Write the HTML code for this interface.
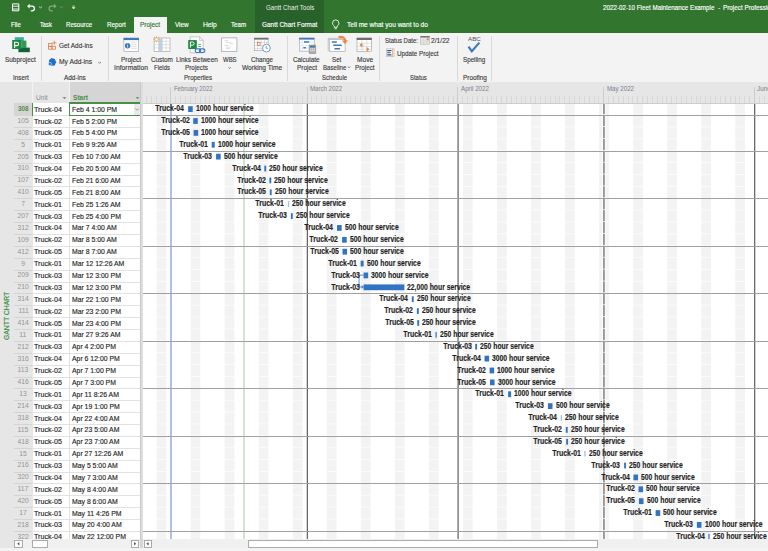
<!DOCTYPE html><html><head><meta charset="utf-8"><style>
*{box-sizing:border-box;margin:0;padding:0}
html,body{width:768px;height:551px;overflow:hidden;background:#f3f3f3;font-family:"Liberation Sans", sans-serif;position:relative}
.a{position:absolute;white-space:nowrap}
svg{position:absolute;overflow:visible}
</style></head><body><div class="a" style="left:0;top:0;width:768px;height:33px;background:#31752f"></div>
<div class="a" style="left:255px;top:0;width:69px;height:33px;background:#29612a"></div>
<div class="a" style="left:133.5px;top:16.7px;width:33.1px;height:16.5px;background:#f3f3f3"></div>
<div class="a" style="left:10.90px;top:21.37px;font-size:7.0px;line-height:1;color:#ffffff;transform:scaleX(0.8687);transform-origin:0 0;-webkit-text-stroke:0.15px #ffffff">File</div>
<div class="a" style="left:39.50px;top:21.37px;font-size:7.0px;line-height:1;color:#ffffff;transform:scaleX(0.8191);transform-origin:0 0;-webkit-text-stroke:0.15px #ffffff">Task</div>
<div class="a" style="left:65.80px;top:21.37px;font-size:7.0px;line-height:1;color:#ffffff;transform:scaleX(0.8709);transform-origin:0 0;-webkit-text-stroke:0.15px #ffffff">Resource</div>
<div class="a" style="left:106.50px;top:21.37px;font-size:7.0px;line-height:1;color:#ffffff;transform:scaleX(0.8946);transform-origin:0 0;-webkit-text-stroke:0.15px #ffffff">Report</div>
<div class="a" style="left:139.80px;top:21.37px;font-size:7.0px;line-height:1;color:#31752f;transform:scaleX(0.9222);transform-origin:0 0;-webkit-text-stroke:0.15px #31752f">Project</div>
<div class="a" style="left:174.50px;top:21.37px;font-size:7.0px;line-height:1;color:#ffffff;transform:scaleX(0.9038);transform-origin:0 0;-webkit-text-stroke:0.15px #ffffff">View</div>
<div class="a" style="left:202.50px;top:21.37px;font-size:7.0px;line-height:1;color:#ffffff;transform:scaleX(0.9579);transform-origin:0 0;-webkit-text-stroke:0.15px #ffffff">Help</div>
<div class="a" style="left:230.80px;top:21.37px;font-size:7.0px;line-height:1;color:#ffffff;transform:scaleX(0.8759);transform-origin:0 0;-webkit-text-stroke:0.15px #ffffff">Team</div>
<div class="a" style="left:261.50px;top:21.37px;font-size:7.0px;line-height:1;color:#ffffff;transform:scaleX(0.9171);transform-origin:0 0;-webkit-text-stroke:0.15px #ffffff">Gantt Chart Format</div>
<div class="a" style="left:346.50px;top:21.37px;font-size:7.0px;line-height:1;color:#ffffff;transform:scaleX(0.9364);transform-origin:0 0;-webkit-text-stroke:0.15px #ffffff">Tell me what you want to do</div>
<div class="a" style="left:265.80px;top:3.87px;font-size:7.0px;line-height:1;color:#e8efe8;transform:scaleX(0.8906);transform-origin:0 0;">Gantt Chart Tools</div>
<div class="a" style="left:602.60px;top:3.91px;font-size:7.2px;line-height:1;color:#ffffff;transform:scaleX(0.8713);transform-origin:0 0;-webkit-text-stroke:0.15px #fff">2022-02-10 Fleet Maintenance Example</div>
<div class="a" style="left:717.60px;top:3.91px;font-size:7.2px;line-height:1;color:#ffffff;transform:scaleX(0.9974);transform-origin:0 0;">-</div>
<div class="a" style="left:723.30px;top:3.91px;font-size:7.2px;line-height:1;color:#ffffff;transform:scaleX(0.8800);transform-origin:0 0;-webkit-text-stroke:0.15px #fff">Project Professional</div>
<svg style="left:0;top:0" width="90" height="16" viewBox="0 0 90 16">
<g fill="none" stroke="#fff" stroke-width="1.1">
<path d="M12.5 3.9h6.3v6.9h-6.3z" stroke-width="1.0"/><path d="M12.5 6.2h6.3M12.5 9h6.3" stroke-width="0.9"/>
<path d="M28.5 6.2h3.6a2.3 2.3 0 0 1 0 4.6h-1.3" stroke-width="1.3"/>
</g>
<path d="M27 6.2l2.6-2.4v4.8z" fill="#fff"/>
<path d="M39 6.6l1.5 1.2 1.5-1.2" fill="none" stroke="#dfe9df" stroke-width="0.8"/>
<g fill="none" stroke="#7fae7d" stroke-width="1.2"><path d="M55 6.2h-3.6a2.3 2.3 0 0 0 0 4.6h1.3"/></g>
<path d="M56.6 6.2l-2.6-2.4v4.8z" fill="#7fae7d"/>
<path d="M60.2 6.6l1.3 1.1 1.3-1.1" fill="none" stroke="#7fae7d" stroke-width="0.8"/>
<path d="M72.3 6.1h2.6M72.3 7.4h2.6l-1.3 1.6z" fill="#e8efe8" stroke="#e8efe8" stroke-width="0.7"/>
</svg>
<svg style="left:0;top:0" width="345" height="33" viewBox="0 0 345 33">
<path d="M334.3 27.4v-1.3c-1-0.7-1.8-1.8-1.8-3a3.2 3.2 0 0 1 6.4 0c0 1.2-0.8 2.3-1.8 3v1.3z" fill="none" stroke="#fff" stroke-width="0.85"/>
<path d="M334.5 28.8h2.4" stroke="#fff" stroke-width="0.8"/>
</svg>
<div class="a" style="left:0;top:33px;width:768px;height:49px;background:#f3f3f3"></div>
<div class="a" style="left:41.3px;top:35.5px;width:1px;height:45px;background:#d9d9d9"></div>
<div class="a" style="left:107.7px;top:35.5px;width:1px;height:45px;background:#d9d9d9"></div>
<div class="a" style="left:286.9px;top:35.5px;width:1px;height:45px;background:#d9d9d9"></div>
<div class="a" style="left:379.3px;top:35.5px;width:1px;height:45px;background:#d9d9d9"></div>
<div class="a" style="left:456.9px;top:35.5px;width:1px;height:45px;background:#d9d9d9"></div>
<div class="a" style="left:491.0px;top:35.5px;width:1px;height:45px;background:#d9d9d9"></div>
<div class="a" style="left:5.40px;top:55.97px;font-size:7.0px;line-height:1;color:#363636;transform:scaleX(0.9173);transform-origin:0 0;-webkit-text-stroke:0.12px #363636">Subproject</div>
<div class="a" style="left:120.90px;top:55.97px;font-size:7.0px;line-height:1;color:#363636;transform:scaleX(0.9222);transform-origin:0 0;-webkit-text-stroke:0.12px #363636">Project</div>
<div class="a" style="left:113.90px;top:64.27px;font-size:7.0px;line-height:1;color:#363636;transform:scaleX(0.9734);transform-origin:0 0;-webkit-text-stroke:0.12px #363636">Information</div>
<div class="a" style="left:151.10px;top:55.97px;font-size:7.0px;line-height:1;color:#363636;transform:scaleX(0.9078);transform-origin:0 0;-webkit-text-stroke:0.12px #363636">Custom</div>
<div class="a" style="left:154.00px;top:64.27px;font-size:7.0px;line-height:1;color:#363636;transform:scaleX(0.8562);transform-origin:0 0;-webkit-text-stroke:0.12px #363636">Fields</div>
<div class="a" style="left:176.20px;top:55.97px;font-size:7.0px;line-height:1;color:#363636;transform:scaleX(0.9181);transform-origin:0 0;-webkit-text-stroke:0.12px #363636">Links Between</div>
<div class="a" style="left:185.20px;top:64.27px;font-size:7.0px;line-height:1;color:#363636;transform:scaleX(0.9092);transform-origin:0 0;-webkit-text-stroke:0.12px #363636">Projects</div>
<div class="a" style="left:222.90px;top:55.97px;font-size:7.0px;line-height:1;color:#363636;transform:scaleX(0.8525);transform-origin:0 0;-webkit-text-stroke:0.12px #363636">WBS</div>
<div class="a" style="left:251.30px;top:55.97px;font-size:7.0px;line-height:1;color:#363636;transform:scaleX(0.8968);transform-origin:0 0;-webkit-text-stroke:0.12px #363636">Change</div>
<div class="a" style="left:241.80px;top:64.27px;font-size:7.0px;line-height:1;color:#363636;transform:scaleX(0.9397);transform-origin:0 0;-webkit-text-stroke:0.12px #363636">Working Time</div>
<div class="a" style="left:293.30px;top:55.97px;font-size:7.0px;line-height:1;color:#363636;transform:scaleX(0.9079);transform-origin:0 0;-webkit-text-stroke:0.12px #363636">Calculate</div>
<div class="a" style="left:296.50px;top:64.27px;font-size:7.0px;line-height:1;color:#363636;transform:scaleX(0.9176);transform-origin:0 0;-webkit-text-stroke:0.12px #363636">Project</div>
<div class="a" style="left:332.30px;top:55.97px;font-size:7.0px;line-height:1;color:#363636;transform:scaleX(0.8844);transform-origin:0 0;-webkit-text-stroke:0.12px #363636">Set</div>
<div class="a" style="left:322.50px;top:64.27px;font-size:7.0px;line-height:1;color:#363636;transform:scaleX(0.8712);transform-origin:0 0;-webkit-text-stroke:0.12px #363636">Baseline</div>
<div class="a" style="left:356.60px;top:55.97px;font-size:7.0px;line-height:1;color:#363636;transform:scaleX(0.9401);transform-origin:0 0;-webkit-text-stroke:0.12px #363636">Move</div>
<div class="a" style="left:354.50px;top:64.27px;font-size:7.0px;line-height:1;color:#363636;transform:scaleX(0.8992);transform-origin:0 0;-webkit-text-stroke:0.12px #363636">Project</div>
<div class="a" style="left:462.90px;top:55.97px;font-size:7.0px;line-height:1;color:#363636;transform:scaleX(0.8908);transform-origin:0 0;-webkit-text-stroke:0.12px #363636">Spelling</div>
<div class="a" style="left:12.90px;top:74.47px;font-size:7.0px;line-height:1;color:#363636;transform:scaleX(0.9021);transform-origin:0 0;-webkit-text-stroke:0.12px #363636">Insert</div>
<div class="a" style="left:64.20px;top:74.47px;font-size:7.0px;line-height:1;color:#363636;transform:scaleX(0.9185);transform-origin:0 0;-webkit-text-stroke:0.12px #363636">Add-ins</div>
<div class="a" style="left:184.20px;top:74.47px;font-size:7.0px;line-height:1;color:#363636;transform:scaleX(0.8776);transform-origin:0 0;-webkit-text-stroke:0.12px #363636">Properties</div>
<div class="a" style="left:321.50px;top:74.47px;font-size:7.0px;line-height:1;color:#363636;transform:scaleX(0.8595);transform-origin:0 0;-webkit-text-stroke:0.12px #363636">Schedule</div>
<div class="a" style="left:410.10px;top:74.47px;font-size:7.0px;line-height:1;color:#363636;transform:scaleX(0.8459);transform-origin:0 0;-webkit-text-stroke:0.12px #363636">Status</div>
<div class="a" style="left:462.60px;top:74.47px;font-size:7.0px;line-height:1;color:#363636;transform:scaleX(0.9165);transform-origin:0 0;-webkit-text-stroke:0.12px #363636">Proofing</div>
<div class="a" style="left:58.50px;top:42.07px;font-size:7.0px;line-height:1;color:#363636;transform:scaleX(0.9186);transform-origin:0 0;-webkit-text-stroke:0.12px #363636">Get Add-ins</div>
<div class="a" style="left:58.50px;top:58.27px;font-size:7.0px;line-height:1;color:#363636;transform:scaleX(0.9588);transform-origin:0 0;-webkit-text-stroke:0.12px #363636">My Add-ins</div>
<div class="a" style="left:384.60px;top:37.17px;font-size:7.0px;line-height:1;color:#363636;transform:scaleX(0.8539);transform-origin:0 0;-webkit-text-stroke:0.12px #363636">Status Date:</div>
<div class="a" style="left:430.90px;top:37.17px;font-size:7.0px;line-height:1;color:#363636;transform:scaleX(0.9554);transform-origin:0 0;-webkit-text-stroke:0.12px #363636">2/1/22</div>
<div class="a" style="left:396.70px;top:49.57px;font-size:7.0px;line-height:1;color:#363636;transform:scaleX(0.8982);transform-origin:0 0;-webkit-text-stroke:0.12px #363636">Update Project</div>
<svg style="left:0;top:0" width="500" height="82" viewBox="0 0 500 82">
<g fill="none" stroke="#666" stroke-width="0.8">
<path d="M98.2 62l1.4 1.2 1.4-1.2"/>
<path d="M228.4 67.3l1.3 1.1 1.3-1.1"/>
<path d="M347.8 66.6l1.3 1.1 1.3-1.1"/>
</g>
</svg>
<svg style="left:0;top:0" width="500" height="82" viewBox="0 0 500 82">
<!-- Subproject: project logo -->
<rect x="14.8" y="37.2" width="9" height="4" fill="#3aaea3"/>
<rect x="21.4" y="40.6" width="5" height="7.2" fill="#2d9a55"/>
<rect x="18.4" y="47.6" width="11.4" height="4.6" fill="#17613a"/>
<rect x="12.2" y="40" width="9.2" height="9" fill="#1b8a3e"/>
<path d="M14.6 48v-5.8h2.3a1.7 1.7 0 0 1 0 3.4h-2.3" fill="none" stroke="#fff" stroke-width="1.1"/>
<!-- Get Add-ins -->
<g fill="none" stroke="#e07a44" stroke-width="0.75">
<rect x="48.5" y="43.4" width="3.5" height="2.9"/><rect x="48.5" y="46.3" width="3.5" height="2.9"/><rect x="52" y="46.3" width="3.5" height="2.9"/>
<path d="M54.3 40.6v4.4M52.1 42.8h4.4"/>
</g>
<!-- My Add-ins -->
<path d="M51.5 57.9l3.3 1.2 1.3 3.2-1.4 3.2-3.5 0.3-2.5-2.4 0.5-3.5z" fill="#1c6fd1"/>
<circle cx="49.9" cy="64" r="1.6" fill="#1c6fd1" stroke="#f3f3f3" stroke-width="0.6"/>
<!-- Project Information -->
<rect x="123.9" y="38.1" width="14.8" height="13.2" fill="#fff" stroke="#9a9a9a" stroke-width="0.6"/>
<rect x="123.6" y="37.9" width="15.4" height="2.2" fill="#3d78bd"/>
<circle cx="127.6" cy="45.8" r="2.7" fill="#3d78bd"/>
<path d="M127.6 44.9v2.7" stroke="#fff" stroke-width="0.7"/><circle cx="127.6" cy="44" r="0.4" fill="#fff"/>
<g stroke="#c8c8c8" stroke-width="0.6"><path d="M131 42.3h5.6M131 44.3h5.6M131 46.3h5.6M131 48.3h5.6"/></g>
<!-- Custom Fields -->
<rect x="154.1" y="38" width="15.9" height="13.4" fill="#fff" stroke="#9a9a9a" stroke-width="0.6"/>
<rect x="158.7" y="38.2" width="3.6" height="13" fill="#bcd3ee"/>
<g stroke="#c4c4c4" stroke-width="0.5"><path d="M154.1 41.3h15.9M154.1 44.6h15.9M154.1 47.9h15.9M158.7 38v13.4M162.3 38v13.4M166.1 38v13.4"/></g>
<g stroke="#e8a850" stroke-width="0.9"><path d="M156.5 36.3v6.1M153.4 39.4h6.1M154.3 37.2l4.4 4.4M158.7 37.2l-4.4 4.4"/></g>
<circle cx="156.5" cy="39.4" r="1.2" fill="#fff"/>
<!-- Links Between Projects -->
<path d="M190.2 36.8h9.5l3.5 3.5v12.5h-13z" fill="#fff" stroke="#a6a6a6" stroke-width="0.6"/>
<path d="M199.7 36.8v3.5h3.5" fill="none" stroke="#a6a6a6" stroke-width="0.6"/>
<rect x="188.2" y="40.1" width="8.6" height="8.9" fill="#1b8a3e"/>
<path d="M190.4 47.6v-5.6h2.1a1.6 1.6 0 0 1 0 3.2h-2.1" fill="none" stroke="#fff" stroke-width="1"/>
<path d="M198.3 44.4h2.6" stroke="#2aa7a0" stroke-width="0.9"/><path d="M198.3 46.6h2.6" stroke="#2d9a55" stroke-width="0.9"/>
<g fill="none" stroke="#3d78bd" stroke-width="1.2"><rect x="195.2" y="48.9" width="5.6" height="3.6" rx="1.8"/><rect x="199.3" y="48.9" width="5.6" height="3.6" rx="1.8"/></g>
<!-- WBS -->
<rect x="221.5" y="37.9" width="15.4" height="13.4" fill="#fff" stroke="#9d9d9d" stroke-width="0.7"/>
<g stroke="#b8b8b8" stroke-width="0.5"><path d="M224.3 40.7h4M225.8 42.3h5.2M230 43.6h3.2M224.3 45.5h4M225.8 47.1h4.6M225.8 48.6h4"/></g>
<!-- Change Working Time -->
<rect x="254.3" y="38.2" width="13.8" height="12.5" fill="#fff" stroke="#9a9a9a" stroke-width="0.6"/>
<rect x="254.1" y="37.8" width="14.2" height="1.8" fill="#6e6e6e"/>
<g stroke="#bdbdbd" stroke-width="0.5"><path d="M254.3 42.5h13.8M254.3 45.6h13.8M254.3 48.4h13.8M257.7 39.6v11M261.1 39.6v11M264.6 39.6v11"/></g>
<rect x="257.4" y="42.3" width="2.7" height="3" fill="none" stroke="#e07a44" stroke-width="0.8"/>
<circle cx="266.4" cy="48.1" r="3.9" fill="#fff" stroke="#4a86c8" stroke-width="0.8"/>
<path d="M266.2 45.9v2.4h1.8" fill="none" stroke="#555" stroke-width="0.6"/>
<!-- Calculate Project -->
<rect x="299.4" y="38.1" width="14.8" height="13" fill="#fff" stroke="#9a9a9a" stroke-width="0.6"/>
<rect x="299.2" y="37.8" width="15.2" height="1.8" fill="#3d78bd"/>
<g stroke="#c9d6e6" stroke-width="0.5"><path d="M302.3 39.6v11.5M299.4 42.5h14.8M299.4 45.3h14.8M299.4 48.2h14.8"/></g>
<rect x="304" y="41.2" width="5.2" height="1.5" fill="#3d78bd"/>
<rect x="303.3" y="47" width="2.6" height="1.5" fill="#3d78bd"/>
<rect x="309.1" y="45" width="6.7" height="8.6" fill="#a9a9a9" stroke="#8a8a8a" stroke-width="0.5"/>
<rect x="309.9" y="45.8" width="5.1" height="1.6" fill="#3d78bd"/>
<g fill="#e6e6e6"><rect x="310" y="48.3" width="1.4" height="1.1"/><rect x="311.8" y="48.3" width="1.4" height="1.1"/><rect x="313.6" y="48.3" width="1.4" height="1.1"/><rect x="310" y="50.2" width="1.4" height="1.1"/><rect x="311.8" y="50.2" width="1.4" height="1.1"/><rect x="313.6" y="50.2" width="1.4" height="1.1"/></g>
<!-- Set Baseline -->
<path d="M328.2 51.2v-12.9h14" fill="none" stroke="#a0a0a0" stroke-width="0.6"/>
<rect x="329.5" y="39.6" width="15.6" height="11.8" fill="#fff" stroke="#a0a0a0" stroke-width="0.6"/>
<g stroke="#3d78bd" stroke-width="1.5" stroke-linecap="round"><path d="M332.3 41.9h4M333.8 45.3h7.4M335 48.7h4.5"/></g>
<path d="M338.6 37.2c3.8-1.2 7 1 6.6 4.6" fill="none" stroke="#e8884a" stroke-width="2.2"/>
<path d="M341.8 40.6l3.2 3.6 2.8-3.9z" fill="#e8884a"/>
<!-- Move Project -->
<rect x="357" y="38.1" width="14.6" height="13.4" fill="#fff" stroke="#9a9a9a" stroke-width="0.6"/>
<rect x="356.7" y="37.8" width="15.1" height="2.2" fill="#6e6e6e"/>
<g stroke="#c4c4c4" stroke-width="0.5"><path d="M357 43.2h14.6M357 46.6h14.6M357 49.3h14.6M361.9 40v11.5M366.8 40v11.5"/></g>
<path d="M362.3 42.6l-3 2.4 3 2.4z" fill="#e8884a"/>
<path d="M366.6 46.9l3 2.4-3 2.4z" fill="#e8884a"/>
<path d="M361.7 45.1h3" stroke="#9a9a9a" stroke-width="0.5"/>
<!-- Status date calendar -->
<rect x="420.7" y="36.2" width="8.8" height="8" fill="#e9e9e9" stroke="#a6a6a6" stroke-width="0.5"/>
<rect x="420.6" y="36" width="9" height="1.6" fill="#777"/>
<g stroke="#c8c8c8" stroke-width="0.4"><path d="M423.6 37.6v6.6M426.6 37.6v6.6M420.7 40.2h8.8M420.7 42.3h8.8"/></g>
<rect x="426.9" y="38.4" width="1.8" height="1.8" fill="#f07840"/>
<!-- Update project -->
<rect x="386.3" y="48.9" width="7.7" height="7.7" fill="#fff" stroke="#9a9a9a" stroke-width="0.5"/>
<g stroke="#2b4f8a" stroke-width="1.1"><path d="M387.2 50.6h4.3M387.2 52.7h3.5M387.2 54.9h4.3"/></g>
<path d="M392.6 49v7.5" stroke="#e8a040" stroke-width="0.8"/>
<!-- Spelling -->
<path d="M468.5 46.6l3.3 4.6 7.6-8.6" fill="none" stroke="#3d78bd" stroke-width="2.1"/>
</svg>
<div class="a" style="left:467.80px;top:36.15px;font-size:6.2px;line-height:1;color:#555555;transform:scaleX(1.0130);transform-origin:0 0;">ABC</div>
<div class="a" style="left:0;top:82px;width:768px;height:457.3px;background:#e6e6e6"></div>
<div class="a" style="left:69px;top:82px;width:70.5px;height:21px;background:#d5d5d5"></div>
<div class="a" style="left:32px;top:82px;width:0.8px;height:21px;background:#f2f2f2"></div>
<div class="a" style="left:68.6px;top:82px;width:0.8px;height:21px;background:#f2f2f2"></div>
<div class="a" style="left:139.9px;top:82px;width:2.8px;height:457.3px;background:#dedede;border-left:0.8px solid #c9c9c9"></div>
<div class="a" style="left:35.80px;top:93.57px;font-size:7.0px;line-height:1;color:#8a8a8a;transform:scaleX(0.9395);transform-origin:0 0;">Unit</div>
<div class="a" style="left:72.90px;top:93.57px;font-size:7.0px;line-height:1;font-weight:bold;color:#4a8f47;transform:scaleX(0.9403);transform-origin:0 0;">Start</div>
<svg style="left:0;top:0" width="145" height="104" viewBox="0 0 145 104"><path d="M62.5 97.2h3.9l-1.95 1.9z" fill="#707070"/><path d="M135.6 97.2h3.7l-1.85 1.9z" fill="#4a8f47"/></svg>
<div class="a" style="left:2.6px;top:339.7px;transform-origin:0 0;transform:rotate(-90deg) scaleX(0.85);font-size:8px;line-height:8px;color:#3f9140;-webkit-text-stroke:0.2px #3f9140">GANTT CHART</div>
<div class="a" style="left:32.8px;top:103.02px;width:107.1px;height:439.56px;background:#fff"></div>
<div class="a" style="left:14px;top:103.12px;width:18px;height:12.38px;background:#d5d5d5"></div>
<div class="a" style="left:68.8px;top:103.02px;width:1px;height:439.56px;background:#e2e2e2"></div>
<div class="a" style="left:14px;top:115.20px;width:18px;height:1px;background:#d4d4d4"></div>
<div class="a" style="left:32.8px;top:115.20px;width:107.1px;height:1px;background:#e2e2e2"></div>
<div class="a" style="left:17.03px;top:105.06px;font-size:7.4px;line-height:1;font-weight:bold;color:#4a8f47;transform:scaleX(0.8500);transform-origin:50% 0;">308</div>
<div class="a" style="left:34.30px;top:105.69px;font-size:7.6px;line-height:1;color:#222222;transform:scaleX(0.9400);transform-origin:0 0;-webkit-text-stroke:0.15px #222">Truck-04</div>
<div class="a" style="left:71.80px;top:105.69px;font-size:7.6px;line-height:1;color:#222222;transform:scaleX(0.9050);transform-origin:0 0;-webkit-text-stroke:0.15px #222">Feb 4 1:00 PM</div>
<div class="a" style="left:14px;top:127.08px;width:18px;height:1px;background:#d4d4d4"></div>
<div class="a" style="left:32.8px;top:127.08px;width:107.1px;height:1px;background:#e2e2e2"></div>
<div class="a" style="left:17.03px;top:116.94px;font-size:7.4px;line-height:1;color:#959595;transform:scaleX(0.9200);transform-origin:50% 0;">105</div>
<div class="a" style="left:34.30px;top:117.57px;font-size:7.6px;line-height:1;color:#222222;transform:scaleX(0.9400);transform-origin:0 0;-webkit-text-stroke:0.15px #222">Truck-02</div>
<div class="a" style="left:71.80px;top:117.57px;font-size:7.6px;line-height:1;color:#222222;transform:scaleX(0.9050);transform-origin:0 0;-webkit-text-stroke:0.15px #222">Feb 5 2:00 PM</div>
<div class="a" style="left:14px;top:138.96px;width:18px;height:1px;background:#d4d4d4"></div>
<div class="a" style="left:32.8px;top:138.96px;width:107.1px;height:1px;background:#e2e2e2"></div>
<div class="a" style="left:17.03px;top:128.82px;font-size:7.4px;line-height:1;color:#959595;transform:scaleX(0.9200);transform-origin:50% 0;">408</div>
<div class="a" style="left:34.30px;top:129.45px;font-size:7.6px;line-height:1;color:#222222;transform:scaleX(0.9400);transform-origin:0 0;-webkit-text-stroke:0.15px #222">Truck-05</div>
<div class="a" style="left:71.80px;top:129.45px;font-size:7.6px;line-height:1;color:#222222;transform:scaleX(0.9050);transform-origin:0 0;-webkit-text-stroke:0.15px #222">Feb 5 4:00 PM</div>
<div class="a" style="left:14px;top:150.84px;width:18px;height:1px;background:#d4d4d4"></div>
<div class="a" style="left:32.8px;top:150.84px;width:107.1px;height:1px;background:#e2e2e2"></div>
<div class="a" style="left:21.14px;top:140.70px;font-size:7.4px;line-height:1;color:#959595;transform:scaleX(0.9200);transform-origin:50% 0;">5</div>
<div class="a" style="left:34.30px;top:141.33px;font-size:7.6px;line-height:1;color:#222222;transform:scaleX(0.9400);transform-origin:0 0;-webkit-text-stroke:0.15px #222">Truck-01</div>
<div class="a" style="left:71.80px;top:141.33px;font-size:7.6px;line-height:1;color:#222222;transform:scaleX(0.9050);transform-origin:0 0;-webkit-text-stroke:0.15px #222">Feb 9 9:26 AM</div>
<div class="a" style="left:14px;top:162.72px;width:18px;height:1px;background:#d4d4d4"></div>
<div class="a" style="left:32.8px;top:162.72px;width:107.1px;height:1px;background:#e2e2e2"></div>
<div class="a" style="left:17.03px;top:152.58px;font-size:7.4px;line-height:1;color:#959595;transform:scaleX(0.9200);transform-origin:50% 0;">205</div>
<div class="a" style="left:34.30px;top:153.21px;font-size:7.6px;line-height:1;color:#222222;transform:scaleX(0.9400);transform-origin:0 0;-webkit-text-stroke:0.15px #222">Truck-03</div>
<div class="a" style="left:71.80px;top:153.21px;font-size:7.6px;line-height:1;color:#222222;transform:scaleX(0.9050);transform-origin:0 0;-webkit-text-stroke:0.15px #222">Feb 10 7:00 AM</div>
<div class="a" style="left:14px;top:174.60px;width:18px;height:1px;background:#d4d4d4"></div>
<div class="a" style="left:32.8px;top:174.60px;width:107.1px;height:1px;background:#e2e2e2"></div>
<div class="a" style="left:17.03px;top:164.46px;font-size:7.4px;line-height:1;color:#959595;transform:scaleX(0.9200);transform-origin:50% 0;">310</div>
<div class="a" style="left:34.30px;top:165.09px;font-size:7.6px;line-height:1;color:#222222;transform:scaleX(0.9400);transform-origin:0 0;-webkit-text-stroke:0.15px #222">Truck-04</div>
<div class="a" style="left:71.80px;top:165.09px;font-size:7.6px;line-height:1;color:#222222;transform:scaleX(0.9050);transform-origin:0 0;-webkit-text-stroke:0.15px #222">Feb 20 5:00 AM</div>
<div class="a" style="left:14px;top:186.48px;width:18px;height:1px;background:#d4d4d4"></div>
<div class="a" style="left:32.8px;top:186.48px;width:107.1px;height:1px;background:#e2e2e2"></div>
<div class="a" style="left:17.03px;top:176.34px;font-size:7.4px;line-height:1;color:#959595;transform:scaleX(0.9200);transform-origin:50% 0;">107</div>
<div class="a" style="left:34.30px;top:176.97px;font-size:7.6px;line-height:1;color:#222222;transform:scaleX(0.9400);transform-origin:0 0;-webkit-text-stroke:0.15px #222">Truck-02</div>
<div class="a" style="left:71.80px;top:176.97px;font-size:7.6px;line-height:1;color:#222222;transform:scaleX(0.9050);transform-origin:0 0;-webkit-text-stroke:0.15px #222">Feb 21 6:00 AM</div>
<div class="a" style="left:14px;top:198.36px;width:18px;height:1px;background:#d4d4d4"></div>
<div class="a" style="left:32.8px;top:198.36px;width:107.1px;height:1px;background:#e2e2e2"></div>
<div class="a" style="left:17.03px;top:188.22px;font-size:7.4px;line-height:1;color:#959595;transform:scaleX(0.9200);transform-origin:50% 0;">410</div>
<div class="a" style="left:34.30px;top:188.85px;font-size:7.6px;line-height:1;color:#222222;transform:scaleX(0.9400);transform-origin:0 0;-webkit-text-stroke:0.15px #222">Truck-05</div>
<div class="a" style="left:71.80px;top:188.85px;font-size:7.6px;line-height:1;color:#222222;transform:scaleX(0.9050);transform-origin:0 0;-webkit-text-stroke:0.15px #222">Feb 21 8:00 AM</div>
<div class="a" style="left:14px;top:210.24px;width:18px;height:1px;background:#d4d4d4"></div>
<div class="a" style="left:32.8px;top:210.24px;width:107.1px;height:1px;background:#e2e2e2"></div>
<div class="a" style="left:21.14px;top:200.10px;font-size:7.4px;line-height:1;color:#959595;transform:scaleX(0.9200);transform-origin:50% 0;">7</div>
<div class="a" style="left:34.30px;top:200.73px;font-size:7.6px;line-height:1;color:#222222;transform:scaleX(0.9400);transform-origin:0 0;-webkit-text-stroke:0.15px #222">Truck-01</div>
<div class="a" style="left:71.80px;top:200.73px;font-size:7.6px;line-height:1;color:#222222;transform:scaleX(0.9050);transform-origin:0 0;-webkit-text-stroke:0.15px #222">Feb 25 1:26 AM</div>
<div class="a" style="left:14px;top:222.12px;width:18px;height:1px;background:#d4d4d4"></div>
<div class="a" style="left:32.8px;top:222.12px;width:107.1px;height:1px;background:#e2e2e2"></div>
<div class="a" style="left:17.03px;top:211.98px;font-size:7.4px;line-height:1;color:#959595;transform:scaleX(0.9200);transform-origin:50% 0;">207</div>
<div class="a" style="left:34.30px;top:212.61px;font-size:7.6px;line-height:1;color:#222222;transform:scaleX(0.9400);transform-origin:0 0;-webkit-text-stroke:0.15px #222">Truck-03</div>
<div class="a" style="left:71.80px;top:212.61px;font-size:7.6px;line-height:1;color:#222222;transform:scaleX(0.9050);transform-origin:0 0;-webkit-text-stroke:0.15px #222">Feb 25 4:00 PM</div>
<div class="a" style="left:14px;top:234.00px;width:18px;height:1px;background:#d4d4d4"></div>
<div class="a" style="left:32.8px;top:234.00px;width:107.1px;height:1px;background:#e2e2e2"></div>
<div class="a" style="left:17.03px;top:223.86px;font-size:7.4px;line-height:1;color:#959595;transform:scaleX(0.9200);transform-origin:50% 0;">312</div>
<div class="a" style="left:34.30px;top:224.49px;font-size:7.6px;line-height:1;color:#222222;transform:scaleX(0.9400);transform-origin:0 0;-webkit-text-stroke:0.15px #222">Truck-04</div>
<div class="a" style="left:71.80px;top:224.49px;font-size:7.6px;line-height:1;color:#222222;transform:scaleX(0.9050);transform-origin:0 0;-webkit-text-stroke:0.15px #222">Mar 7 4:00 AM</div>
<div class="a" style="left:14px;top:245.88px;width:18px;height:1px;background:#d4d4d4"></div>
<div class="a" style="left:32.8px;top:245.88px;width:107.1px;height:1px;background:#e2e2e2"></div>
<div class="a" style="left:17.03px;top:235.74px;font-size:7.4px;line-height:1;color:#959595;transform:scaleX(0.9200);transform-origin:50% 0;">109</div>
<div class="a" style="left:34.30px;top:236.37px;font-size:7.6px;line-height:1;color:#222222;transform:scaleX(0.9400);transform-origin:0 0;-webkit-text-stroke:0.15px #222">Truck-02</div>
<div class="a" style="left:71.80px;top:236.37px;font-size:7.6px;line-height:1;color:#222222;transform:scaleX(0.9050);transform-origin:0 0;-webkit-text-stroke:0.15px #222">Mar 8 5:00 AM</div>
<div class="a" style="left:14px;top:257.76px;width:18px;height:1px;background:#d4d4d4"></div>
<div class="a" style="left:32.8px;top:257.76px;width:107.1px;height:1px;background:#e2e2e2"></div>
<div class="a" style="left:17.03px;top:247.62px;font-size:7.4px;line-height:1;color:#959595;transform:scaleX(0.9200);transform-origin:50% 0;">412</div>
<div class="a" style="left:34.30px;top:248.25px;font-size:7.6px;line-height:1;color:#222222;transform:scaleX(0.9400);transform-origin:0 0;-webkit-text-stroke:0.15px #222">Truck-05</div>
<div class="a" style="left:71.80px;top:248.25px;font-size:7.6px;line-height:1;color:#222222;transform:scaleX(0.9050);transform-origin:0 0;-webkit-text-stroke:0.15px #222">Mar 8 7:00 AM</div>
<div class="a" style="left:14px;top:269.64px;width:18px;height:1px;background:#d4d4d4"></div>
<div class="a" style="left:32.8px;top:269.64px;width:107.1px;height:1px;background:#e2e2e2"></div>
<div class="a" style="left:21.14px;top:259.50px;font-size:7.4px;line-height:1;color:#959595;transform:scaleX(0.9200);transform-origin:50% 0;">9</div>
<div class="a" style="left:34.30px;top:260.13px;font-size:7.6px;line-height:1;color:#222222;transform:scaleX(0.9400);transform-origin:0 0;-webkit-text-stroke:0.15px #222">Truck-01</div>
<div class="a" style="left:71.80px;top:260.13px;font-size:7.6px;line-height:1;color:#222222;transform:scaleX(0.9050);transform-origin:0 0;-webkit-text-stroke:0.15px #222">Mar 12 12:26 AM</div>
<div class="a" style="left:14px;top:281.52px;width:18px;height:1px;background:#d4d4d4"></div>
<div class="a" style="left:32.8px;top:281.52px;width:107.1px;height:1px;background:#e2e2e2"></div>
<div class="a" style="left:17.03px;top:271.38px;font-size:7.4px;line-height:1;color:#959595;transform:scaleX(0.9200);transform-origin:50% 0;">209</div>
<div class="a" style="left:34.30px;top:272.01px;font-size:7.6px;line-height:1;color:#222222;transform:scaleX(0.9400);transform-origin:0 0;-webkit-text-stroke:0.15px #222">Truck-03</div>
<div class="a" style="left:71.80px;top:272.01px;font-size:7.6px;line-height:1;color:#222222;transform:scaleX(0.9050);transform-origin:0 0;-webkit-text-stroke:0.15px #222">Mar 12 3:00 PM</div>
<div class="a" style="left:14px;top:293.40px;width:18px;height:1px;background:#d4d4d4"></div>
<div class="a" style="left:32.8px;top:293.40px;width:107.1px;height:1px;background:#e2e2e2"></div>
<div class="a" style="left:17.03px;top:283.26px;font-size:7.4px;line-height:1;color:#959595;transform:scaleX(0.9200);transform-origin:50% 0;">210</div>
<div class="a" style="left:34.30px;top:283.89px;font-size:7.6px;line-height:1;color:#222222;transform:scaleX(0.9400);transform-origin:0 0;-webkit-text-stroke:0.15px #222">Truck-03</div>
<div class="a" style="left:71.80px;top:283.89px;font-size:7.6px;line-height:1;color:#222222;transform:scaleX(0.9050);transform-origin:0 0;-webkit-text-stroke:0.15px #222">Mar 12 3:00 PM</div>
<div class="a" style="left:14px;top:305.28px;width:18px;height:1px;background:#d4d4d4"></div>
<div class="a" style="left:32.8px;top:305.28px;width:107.1px;height:1px;background:#e2e2e2"></div>
<div class="a" style="left:17.03px;top:295.14px;font-size:7.4px;line-height:1;color:#959595;transform:scaleX(0.9200);transform-origin:50% 0;">314</div>
<div class="a" style="left:34.30px;top:295.77px;font-size:7.6px;line-height:1;color:#222222;transform:scaleX(0.9400);transform-origin:0 0;-webkit-text-stroke:0.15px #222">Truck-04</div>
<div class="a" style="left:71.80px;top:295.77px;font-size:7.6px;line-height:1;color:#222222;transform:scaleX(0.9050);transform-origin:0 0;-webkit-text-stroke:0.15px #222">Mar 22 1:00 PM</div>
<div class="a" style="left:14px;top:317.16px;width:18px;height:1px;background:#d4d4d4"></div>
<div class="a" style="left:32.8px;top:317.16px;width:107.1px;height:1px;background:#e2e2e2"></div>
<div class="a" style="left:17.58px;top:307.02px;font-size:7.4px;line-height:1;color:#959595;transform:scaleX(0.9200);transform-origin:50% 0;">111</div>
<div class="a" style="left:34.30px;top:307.65px;font-size:7.6px;line-height:1;color:#222222;transform:scaleX(0.9400);transform-origin:0 0;-webkit-text-stroke:0.15px #222">Truck-02</div>
<div class="a" style="left:71.80px;top:307.65px;font-size:7.6px;line-height:1;color:#222222;transform:scaleX(0.9050);transform-origin:0 0;-webkit-text-stroke:0.15px #222">Mar 23 2:00 PM</div>
<div class="a" style="left:14px;top:329.04px;width:18px;height:1px;background:#d4d4d4"></div>
<div class="a" style="left:32.8px;top:329.04px;width:107.1px;height:1px;background:#e2e2e2"></div>
<div class="a" style="left:17.03px;top:318.90px;font-size:7.4px;line-height:1;color:#959595;transform:scaleX(0.9200);transform-origin:50% 0;">414</div>
<div class="a" style="left:34.30px;top:319.53px;font-size:7.6px;line-height:1;color:#222222;transform:scaleX(0.9400);transform-origin:0 0;-webkit-text-stroke:0.15px #222">Truck-05</div>
<div class="a" style="left:71.80px;top:319.53px;font-size:7.6px;line-height:1;color:#222222;transform:scaleX(0.9050);transform-origin:0 0;-webkit-text-stroke:0.15px #222">Mar 23 4:00 PM</div>
<div class="a" style="left:14px;top:340.92px;width:18px;height:1px;background:#d4d4d4"></div>
<div class="a" style="left:32.8px;top:340.92px;width:107.1px;height:1px;background:#e2e2e2"></div>
<div class="a" style="left:19.36px;top:330.78px;font-size:7.4px;line-height:1;color:#959595;transform:scaleX(0.9200);transform-origin:50% 0;">11</div>
<div class="a" style="left:34.30px;top:331.41px;font-size:7.6px;line-height:1;color:#222222;transform:scaleX(0.9400);transform-origin:0 0;-webkit-text-stroke:0.15px #222">Truck-01</div>
<div class="a" style="left:71.80px;top:331.41px;font-size:7.6px;line-height:1;color:#222222;transform:scaleX(0.9050);transform-origin:0 0;-webkit-text-stroke:0.15px #222">Mar 27 9:26 AM</div>
<div class="a" style="left:14px;top:352.80px;width:18px;height:1px;background:#d4d4d4"></div>
<div class="a" style="left:32.8px;top:352.80px;width:107.1px;height:1px;background:#e2e2e2"></div>
<div class="a" style="left:17.03px;top:342.66px;font-size:7.4px;line-height:1;color:#959595;transform:scaleX(0.9200);transform-origin:50% 0;">212</div>
<div class="a" style="left:34.30px;top:343.29px;font-size:7.6px;line-height:1;color:#222222;transform:scaleX(0.9400);transform-origin:0 0;-webkit-text-stroke:0.15px #222">Truck-03</div>
<div class="a" style="left:71.80px;top:343.29px;font-size:7.6px;line-height:1;color:#222222;transform:scaleX(0.9050);transform-origin:0 0;-webkit-text-stroke:0.15px #222">Apr 4 2:00 PM</div>
<div class="a" style="left:14px;top:364.68px;width:18px;height:1px;background:#d4d4d4"></div>
<div class="a" style="left:32.8px;top:364.68px;width:107.1px;height:1px;background:#e2e2e2"></div>
<div class="a" style="left:17.03px;top:354.54px;font-size:7.4px;line-height:1;color:#959595;transform:scaleX(0.9200);transform-origin:50% 0;">316</div>
<div class="a" style="left:34.30px;top:355.17px;font-size:7.6px;line-height:1;color:#222222;transform:scaleX(0.9400);transform-origin:0 0;-webkit-text-stroke:0.15px #222">Truck-04</div>
<div class="a" style="left:71.80px;top:355.17px;font-size:7.6px;line-height:1;color:#222222;transform:scaleX(0.9050);transform-origin:0 0;-webkit-text-stroke:0.15px #222">Apr 6 12:00 PM</div>
<div class="a" style="left:14px;top:376.56px;width:18px;height:1px;background:#d4d4d4"></div>
<div class="a" style="left:32.8px;top:376.56px;width:107.1px;height:1px;background:#e2e2e2"></div>
<div class="a" style="left:17.30px;top:366.42px;font-size:7.4px;line-height:1;color:#959595;transform:scaleX(0.9200);transform-origin:50% 0;">113</div>
<div class="a" style="left:34.30px;top:367.05px;font-size:7.6px;line-height:1;color:#222222;transform:scaleX(0.9400);transform-origin:0 0;-webkit-text-stroke:0.15px #222">Truck-02</div>
<div class="a" style="left:71.80px;top:367.05px;font-size:7.6px;line-height:1;color:#222222;transform:scaleX(0.9050);transform-origin:0 0;-webkit-text-stroke:0.15px #222">Apr 7 1:00 PM</div>
<div class="a" style="left:14px;top:388.44px;width:18px;height:1px;background:#d4d4d4"></div>
<div class="a" style="left:32.8px;top:388.44px;width:107.1px;height:1px;background:#e2e2e2"></div>
<div class="a" style="left:17.03px;top:378.30px;font-size:7.4px;line-height:1;color:#959595;transform:scaleX(0.9200);transform-origin:50% 0;">416</div>
<div class="a" style="left:34.30px;top:378.93px;font-size:7.6px;line-height:1;color:#222222;transform:scaleX(0.9400);transform-origin:0 0;-webkit-text-stroke:0.15px #222">Truck-05</div>
<div class="a" style="left:71.80px;top:378.93px;font-size:7.6px;line-height:1;color:#222222;transform:scaleX(0.9050);transform-origin:0 0;-webkit-text-stroke:0.15px #222">Apr 7 3:00 PM</div>
<div class="a" style="left:14px;top:400.32px;width:18px;height:1px;background:#d4d4d4"></div>
<div class="a" style="left:32.8px;top:400.32px;width:107.1px;height:1px;background:#e2e2e2"></div>
<div class="a" style="left:19.08px;top:390.18px;font-size:7.4px;line-height:1;color:#959595;transform:scaleX(0.9200);transform-origin:50% 0;">13</div>
<div class="a" style="left:34.30px;top:390.81px;font-size:7.6px;line-height:1;color:#222222;transform:scaleX(0.9400);transform-origin:0 0;-webkit-text-stroke:0.15px #222">Truck-01</div>
<div class="a" style="left:71.80px;top:390.81px;font-size:7.6px;line-height:1;color:#222222;transform:scaleX(0.9050);transform-origin:0 0;-webkit-text-stroke:0.15px #222">Apr 11 8:26 AM</div>
<div class="a" style="left:14px;top:412.20px;width:18px;height:1px;background:#d4d4d4"></div>
<div class="a" style="left:32.8px;top:412.20px;width:107.1px;height:1px;background:#e2e2e2"></div>
<div class="a" style="left:17.03px;top:402.06px;font-size:7.4px;line-height:1;color:#959595;transform:scaleX(0.9200);transform-origin:50% 0;">214</div>
<div class="a" style="left:34.30px;top:402.69px;font-size:7.6px;line-height:1;color:#222222;transform:scaleX(0.9400);transform-origin:0 0;-webkit-text-stroke:0.15px #222">Truck-03</div>
<div class="a" style="left:71.80px;top:402.69px;font-size:7.6px;line-height:1;color:#222222;transform:scaleX(0.9050);transform-origin:0 0;-webkit-text-stroke:0.15px #222">Apr 19 1:00 PM</div>
<div class="a" style="left:14px;top:424.08px;width:18px;height:1px;background:#d4d4d4"></div>
<div class="a" style="left:32.8px;top:424.08px;width:107.1px;height:1px;background:#e2e2e2"></div>
<div class="a" style="left:17.03px;top:413.94px;font-size:7.4px;line-height:1;color:#959595;transform:scaleX(0.9200);transform-origin:50% 0;">318</div>
<div class="a" style="left:34.30px;top:414.57px;font-size:7.6px;line-height:1;color:#222222;transform:scaleX(0.9400);transform-origin:0 0;-webkit-text-stroke:0.15px #222">Truck-04</div>
<div class="a" style="left:71.80px;top:414.57px;font-size:7.6px;line-height:1;color:#222222;transform:scaleX(0.9050);transform-origin:0 0;-webkit-text-stroke:0.15px #222">Apr 22 4:00 AM</div>
<div class="a" style="left:14px;top:435.96px;width:18px;height:1px;background:#d4d4d4"></div>
<div class="a" style="left:32.8px;top:435.96px;width:107.1px;height:1px;background:#e2e2e2"></div>
<div class="a" style="left:17.30px;top:425.82px;font-size:7.4px;line-height:1;color:#959595;transform:scaleX(0.9200);transform-origin:50% 0;">115</div>
<div class="a" style="left:34.30px;top:426.45px;font-size:7.6px;line-height:1;color:#222222;transform:scaleX(0.9400);transform-origin:0 0;-webkit-text-stroke:0.15px #222">Truck-02</div>
<div class="a" style="left:71.80px;top:426.45px;font-size:7.6px;line-height:1;color:#222222;transform:scaleX(0.9050);transform-origin:0 0;-webkit-text-stroke:0.15px #222">Apr 23 5:00 AM</div>
<div class="a" style="left:14px;top:447.84px;width:18px;height:1px;background:#d4d4d4"></div>
<div class="a" style="left:32.8px;top:447.84px;width:107.1px;height:1px;background:#e2e2e2"></div>
<div class="a" style="left:17.03px;top:437.70px;font-size:7.4px;line-height:1;color:#959595;transform:scaleX(0.9200);transform-origin:50% 0;">418</div>
<div class="a" style="left:34.30px;top:438.33px;font-size:7.6px;line-height:1;color:#222222;transform:scaleX(0.9400);transform-origin:0 0;-webkit-text-stroke:0.15px #222">Truck-05</div>
<div class="a" style="left:71.80px;top:438.33px;font-size:7.6px;line-height:1;color:#222222;transform:scaleX(0.9050);transform-origin:0 0;-webkit-text-stroke:0.15px #222">Apr 23 7:00 AM</div>
<div class="a" style="left:14px;top:459.72px;width:18px;height:1px;background:#d4d4d4"></div>
<div class="a" style="left:32.8px;top:459.72px;width:107.1px;height:1px;background:#e2e2e2"></div>
<div class="a" style="left:19.08px;top:449.58px;font-size:7.4px;line-height:1;color:#959595;transform:scaleX(0.9200);transform-origin:50% 0;">15</div>
<div class="a" style="left:34.30px;top:450.21px;font-size:7.6px;line-height:1;color:#222222;transform:scaleX(0.9400);transform-origin:0 0;-webkit-text-stroke:0.15px #222">Truck-01</div>
<div class="a" style="left:71.80px;top:450.21px;font-size:7.6px;line-height:1;color:#222222;transform:scaleX(0.9050);transform-origin:0 0;-webkit-text-stroke:0.15px #222">Apr 27 12:26 AM</div>
<div class="a" style="left:14px;top:471.60px;width:18px;height:1px;background:#d4d4d4"></div>
<div class="a" style="left:32.8px;top:471.60px;width:107.1px;height:1px;background:#e2e2e2"></div>
<div class="a" style="left:17.03px;top:461.46px;font-size:7.4px;line-height:1;color:#959595;transform:scaleX(0.9200);transform-origin:50% 0;">216</div>
<div class="a" style="left:34.30px;top:462.09px;font-size:7.6px;line-height:1;color:#222222;transform:scaleX(0.9400);transform-origin:0 0;-webkit-text-stroke:0.15px #222">Truck-03</div>
<div class="a" style="left:71.80px;top:462.09px;font-size:7.6px;line-height:1;color:#222222;transform:scaleX(0.9050);transform-origin:0 0;-webkit-text-stroke:0.15px #222">May 5 5:00 AM</div>
<div class="a" style="left:14px;top:483.48px;width:18px;height:1px;background:#d4d4d4"></div>
<div class="a" style="left:32.8px;top:483.48px;width:107.1px;height:1px;background:#e2e2e2"></div>
<div class="a" style="left:17.03px;top:473.34px;font-size:7.4px;line-height:1;color:#959595;transform:scaleX(0.9200);transform-origin:50% 0;">320</div>
<div class="a" style="left:34.30px;top:473.97px;font-size:7.6px;line-height:1;color:#222222;transform:scaleX(0.9400);transform-origin:0 0;-webkit-text-stroke:0.15px #222">Truck-04</div>
<div class="a" style="left:71.80px;top:473.97px;font-size:7.6px;line-height:1;color:#222222;transform:scaleX(0.9050);transform-origin:0 0;-webkit-text-stroke:0.15px #222">May 7 3:00 AM</div>
<div class="a" style="left:14px;top:495.36px;width:18px;height:1px;background:#d4d4d4"></div>
<div class="a" style="left:32.8px;top:495.36px;width:107.1px;height:1px;background:#e2e2e2"></div>
<div class="a" style="left:17.30px;top:485.22px;font-size:7.4px;line-height:1;color:#959595;transform:scaleX(0.9200);transform-origin:50% 0;">117</div>
<div class="a" style="left:34.30px;top:485.85px;font-size:7.6px;line-height:1;color:#222222;transform:scaleX(0.9400);transform-origin:0 0;-webkit-text-stroke:0.15px #222">Truck-02</div>
<div class="a" style="left:71.80px;top:485.85px;font-size:7.6px;line-height:1;color:#222222;transform:scaleX(0.9050);transform-origin:0 0;-webkit-text-stroke:0.15px #222">May 8 4:00 AM</div>
<div class="a" style="left:14px;top:507.24px;width:18px;height:1px;background:#d4d4d4"></div>
<div class="a" style="left:32.8px;top:507.24px;width:107.1px;height:1px;background:#e2e2e2"></div>
<div class="a" style="left:17.03px;top:497.10px;font-size:7.4px;line-height:1;color:#959595;transform:scaleX(0.9200);transform-origin:50% 0;">420</div>
<div class="a" style="left:34.30px;top:497.73px;font-size:7.6px;line-height:1;color:#222222;transform:scaleX(0.9400);transform-origin:0 0;-webkit-text-stroke:0.15px #222">Truck-05</div>
<div class="a" style="left:71.80px;top:497.73px;font-size:7.6px;line-height:1;color:#222222;transform:scaleX(0.9050);transform-origin:0 0;-webkit-text-stroke:0.15px #222">May 8 6:00 AM</div>
<div class="a" style="left:14px;top:519.12px;width:18px;height:1px;background:#d4d4d4"></div>
<div class="a" style="left:32.8px;top:519.12px;width:107.1px;height:1px;background:#e2e2e2"></div>
<div class="a" style="left:19.08px;top:508.98px;font-size:7.4px;line-height:1;color:#959595;transform:scaleX(0.9200);transform-origin:50% 0;">17</div>
<div class="a" style="left:34.30px;top:509.61px;font-size:7.6px;line-height:1;color:#222222;transform:scaleX(0.9400);transform-origin:0 0;-webkit-text-stroke:0.15px #222">Truck-01</div>
<div class="a" style="left:71.80px;top:509.61px;font-size:7.6px;line-height:1;color:#222222;transform:scaleX(0.9050);transform-origin:0 0;-webkit-text-stroke:0.15px #222">May 11 4:26 PM</div>
<div class="a" style="left:14px;top:531.00px;width:18px;height:1px;background:#d4d4d4"></div>
<div class="a" style="left:32.8px;top:531.00px;width:107.1px;height:1px;background:#e2e2e2"></div>
<div class="a" style="left:17.03px;top:520.86px;font-size:7.4px;line-height:1;color:#959595;transform:scaleX(0.9200);transform-origin:50% 0;">218</div>
<div class="a" style="left:34.30px;top:521.49px;font-size:7.6px;line-height:1;color:#222222;transform:scaleX(0.9400);transform-origin:0 0;-webkit-text-stroke:0.15px #222">Truck-03</div>
<div class="a" style="left:71.80px;top:521.49px;font-size:7.6px;line-height:1;color:#222222;transform:scaleX(0.9050);transform-origin:0 0;-webkit-text-stroke:0.15px #222">May 20 4:00 AM</div>
<div class="a" style="left:14px;top:542.88px;width:18px;height:1px;background:#d4d4d4"></div>
<div class="a" style="left:32.8px;top:542.88px;width:107.1px;height:1px;background:#e2e2e2"></div>
<div class="a" style="left:17.03px;top:532.74px;font-size:7.4px;line-height:1;color:#959595;transform:scaleX(0.9200);transform-origin:50% 0;">322</div>
<div class="a" style="left:34.30px;top:533.37px;font-size:7.6px;line-height:1;color:#222222;transform:scaleX(0.9400);transform-origin:0 0;-webkit-text-stroke:0.15px #222">Truck-04</div>
<div class="a" style="left:71.80px;top:533.37px;font-size:7.6px;line-height:1;color:#222222;transform:scaleX(0.9050);transform-origin:0 0;-webkit-text-stroke:0.15px #222">May 22 12:00 PM</div>
<div class="a" style="left:32px;top:103px;width:1.2px;height:12.6px;background:#4a8f47"></div>
<div class="a" style="left:69px;top:102.9px;width:70.9px;height:13.2px;border:1.1px solid #4a8f47;border-right:none"></div>
<div class="a" style="left:134.3px;top:104.3px;width:5.6px;height:10.4px;background:#e9e9e9"></div>
<svg style="left:0;top:0" width="145" height="120" viewBox="0 0 145 120"><path d="M135.4 108.6l1.7 1.6 1.7-1.6" fill="none" stroke="#777" stroke-width="0.7"/></svg>
<div class="a" style="left:69px;top:101.8px;width:70.9px;height:1.8px;background:#4a8f47"></div>
<div class="a" style="left:142.7px;top:103.3px;width:625.3px;height:435.99999999999994px;background:#fff;overflow:hidden">
<svg style="left:0;top:0" width="625.3" height="435.99999999999994" viewBox="142.7 103.3 625.3 435.99999999999994"><rect x="156.31" y="103.3" width="9.72" height="435.99999999999994" fill="#f3f3f3"/><rect x="190.35" y="103.3" width="9.72" height="435.99999999999994" fill="#f3f3f3"/><rect x="224.39" y="103.3" width="9.72" height="435.99999999999994" fill="#f3f3f3"/><rect x="258.43" y="103.3" width="9.72" height="435.99999999999994" fill="#f3f3f3"/><rect x="292.46" y="103.3" width="9.72" height="435.99999999999994" fill="#f3f3f3"/><rect x="326.50" y="103.3" width="9.72" height="435.99999999999994" fill="#f3f3f3"/><rect x="360.54" y="103.3" width="9.72" height="435.99999999999994" fill="#f3f3f3"/><rect x="394.57" y="103.3" width="9.72" height="435.99999999999994" fill="#f3f3f3"/><rect x="428.61" y="103.3" width="9.72" height="435.99999999999994" fill="#f3f3f3"/><rect x="462.65" y="103.3" width="9.72" height="435.99999999999994" fill="#f3f3f3"/><rect x="496.69" y="103.3" width="9.72" height="435.99999999999994" fill="#f3f3f3"/><rect x="530.73" y="103.3" width="9.72" height="435.99999999999994" fill="#f3f3f3"/><rect x="564.76" y="103.3" width="9.72" height="435.99999999999994" fill="#f3f3f3"/><rect x="598.80" y="103.3" width="9.72" height="435.99999999999994" fill="#f3f3f3"/><rect x="632.84" y="103.3" width="9.72" height="435.99999999999994" fill="#f3f3f3"/><rect x="666.88" y="103.3" width="9.72" height="435.99999999999994" fill="#f3f3f3"/><rect x="700.91" y="103.3" width="9.72" height="435.99999999999994" fill="#f3f3f3"/><rect x="734.95" y="103.3" width="9.72" height="435.99999999999994" fill="#f3f3f3"/><rect x="768.99" y="103.3" width="9.72" height="435.99999999999994" fill="#f3f3f3"/><rect x="142.7" y="115.00" width="625.3" height="0.8" fill="#fff" fill-opacity="0.8"/><rect x="142.7" y="126.88" width="625.3" height="0.8" fill="#fff" fill-opacity="0.8"/><rect x="142.7" y="138.76" width="625.3" height="0.8" fill="#fff" fill-opacity="0.8"/><rect x="142.7" y="150.64" width="625.3" height="0.8" fill="#fff" fill-opacity="0.8"/><rect x="142.7" y="162.52" width="625.3" height="0.8" fill="#fff" fill-opacity="0.8"/><rect x="142.7" y="174.40" width="625.3" height="0.8" fill="#fff" fill-opacity="0.8"/><rect x="142.7" y="186.28" width="625.3" height="0.8" fill="#fff" fill-opacity="0.8"/><rect x="142.7" y="198.16" width="625.3" height="0.8" fill="#fff" fill-opacity="0.8"/><rect x="142.7" y="210.04" width="625.3" height="0.8" fill="#fff" fill-opacity="0.8"/><rect x="142.7" y="221.92" width="625.3" height="0.8" fill="#fff" fill-opacity="0.8"/><rect x="142.7" y="233.80" width="625.3" height="0.8" fill="#fff" fill-opacity="0.8"/><rect x="142.7" y="245.68" width="625.3" height="0.8" fill="#fff" fill-opacity="0.8"/><rect x="142.7" y="257.56" width="625.3" height="0.8" fill="#fff" fill-opacity="0.8"/><rect x="142.7" y="269.44" width="625.3" height="0.8" fill="#fff" fill-opacity="0.8"/><rect x="142.7" y="281.32" width="625.3" height="0.8" fill="#fff" fill-opacity="0.8"/><rect x="142.7" y="293.20" width="625.3" height="0.8" fill="#fff" fill-opacity="0.8"/><rect x="142.7" y="305.08" width="625.3" height="0.8" fill="#fff" fill-opacity="0.8"/><rect x="142.7" y="316.96" width="625.3" height="0.8" fill="#fff" fill-opacity="0.8"/><rect x="142.7" y="328.84" width="625.3" height="0.8" fill="#fff" fill-opacity="0.8"/><rect x="142.7" y="340.72" width="625.3" height="0.8" fill="#fff" fill-opacity="0.8"/><rect x="142.7" y="352.60" width="625.3" height="0.8" fill="#fff" fill-opacity="0.8"/><rect x="142.7" y="364.48" width="625.3" height="0.8" fill="#fff" fill-opacity="0.8"/><rect x="142.7" y="376.36" width="625.3" height="0.8" fill="#fff" fill-opacity="0.8"/><rect x="142.7" y="388.24" width="625.3" height="0.8" fill="#fff" fill-opacity="0.8"/><rect x="142.7" y="400.12" width="625.3" height="0.8" fill="#fff" fill-opacity="0.8"/><rect x="142.7" y="412.00" width="625.3" height="0.8" fill="#fff" fill-opacity="0.8"/><rect x="142.7" y="423.88" width="625.3" height="0.8" fill="#fff" fill-opacity="0.8"/><rect x="142.7" y="435.76" width="625.3" height="0.8" fill="#fff" fill-opacity="0.8"/><rect x="142.7" y="447.64" width="625.3" height="0.8" fill="#fff" fill-opacity="0.8"/><rect x="142.7" y="459.52" width="625.3" height="0.8" fill="#fff" fill-opacity="0.8"/><rect x="142.7" y="471.40" width="625.3" height="0.8" fill="#fff" fill-opacity="0.8"/><rect x="142.7" y="483.28" width="625.3" height="0.8" fill="#fff" fill-opacity="0.8"/><rect x="142.7" y="495.16" width="625.3" height="0.8" fill="#fff" fill-opacity="0.8"/><rect x="142.7" y="507.04" width="625.3" height="0.8" fill="#fff" fill-opacity="0.8"/><rect x="142.7" y="518.92" width="625.3" height="0.8" fill="#fff" fill-opacity="0.8"/><rect x="142.7" y="530.80" width="625.3" height="0.8" fill="#fff" fill-opacity="0.8"/><rect x="306.45" y="103.3" width="1.2" height="435.99999999999994" fill="#5e5e5e"/><rect x="457.19" y="103.3" width="1.2" height="435.99999999999994" fill="#5e5e5e"/><rect x="602.06" y="103.3" width="3.2" height="435.99999999999994" fill="#fff"/><rect x="603.06" y="103.42" width="1.2" height="11.18" fill="#5e5e5e"/><rect x="603.06" y="115.30" width="1.2" height="11.18" fill="#5e5e5e"/><rect x="603.06" y="127.18" width="1.2" height="11.18" fill="#5e5e5e"/><rect x="603.06" y="139.06" width="1.2" height="11.18" fill="#5e5e5e"/><rect x="603.06" y="150.94" width="1.2" height="11.18" fill="#5e5e5e"/><rect x="603.06" y="162.82" width="1.2" height="11.18" fill="#5e5e5e"/><rect x="603.06" y="174.70" width="1.2" height="11.18" fill="#5e5e5e"/><rect x="603.06" y="186.58" width="1.2" height="11.18" fill="#5e5e5e"/><rect x="603.06" y="198.46" width="1.2" height="11.18" fill="#5e5e5e"/><rect x="603.06" y="210.34" width="1.2" height="11.18" fill="#5e5e5e"/><rect x="603.06" y="222.22" width="1.2" height="11.18" fill="#5e5e5e"/><rect x="603.06" y="234.10" width="1.2" height="11.18" fill="#5e5e5e"/><rect x="603.06" y="245.98" width="1.2" height="11.18" fill="#5e5e5e"/><rect x="603.06" y="257.86" width="1.2" height="11.18" fill="#5e5e5e"/><rect x="603.06" y="269.74" width="1.2" height="11.18" fill="#5e5e5e"/><rect x="603.06" y="281.62" width="1.2" height="11.18" fill="#5e5e5e"/><rect x="603.06" y="293.50" width="1.2" height="11.18" fill="#5e5e5e"/><rect x="603.06" y="305.38" width="1.2" height="11.18" fill="#5e5e5e"/><rect x="603.06" y="317.26" width="1.2" height="11.18" fill="#5e5e5e"/><rect x="603.06" y="329.14" width="1.2" height="11.18" fill="#5e5e5e"/><rect x="603.06" y="341.02" width="1.2" height="11.18" fill="#5e5e5e"/><rect x="603.06" y="352.90" width="1.2" height="11.18" fill="#5e5e5e"/><rect x="603.06" y="364.78" width="1.2" height="11.18" fill="#5e5e5e"/><rect x="603.06" y="376.66" width="1.2" height="11.18" fill="#5e5e5e"/><rect x="603.06" y="388.54" width="1.2" height="11.18" fill="#5e5e5e"/><rect x="603.06" y="400.42" width="1.2" height="11.18" fill="#5e5e5e"/><rect x="603.06" y="412.30" width="1.2" height="11.18" fill="#5e5e5e"/><rect x="603.06" y="424.18" width="1.2" height="11.18" fill="#5e5e5e"/><rect x="603.06" y="436.06" width="1.2" height="11.18" fill="#5e5e5e"/><rect x="603.06" y="447.94" width="1.2" height="11.18" fill="#5e5e5e"/><rect x="603.06" y="459.82" width="1.2" height="11.18" fill="#5e5e5e"/><rect x="603.06" y="471.70" width="1.2" height="11.18" fill="#5e5e5e"/><rect x="603.06" y="483.58" width="1.2" height="11.18" fill="#5e5e5e"/><rect x="603.06" y="495.46" width="1.2" height="11.18" fill="#5e5e5e"/><rect x="603.06" y="507.34" width="1.2" height="11.18" fill="#5e5e5e"/><rect x="603.06" y="519.22" width="1.2" height="11.18" fill="#5e5e5e"/><rect x="603.06" y="531.10" width="1.2" height="11.18" fill="#5e5e5e"/><rect x="753.80" y="103.3" width="1.2" height="435.99999999999994" fill="#5e5e5e"/><rect x="170" y="103.3" width="2" height="435.99999999999994" fill="#afc0e0" shape-rendering="crispEdges"/><rect x="243" y="103.3" width="2" height="435.99999999999994" fill="#d0e6ce" shape-rendering="crispEdges"/><rect x="142.7" y="115" width="625.3" height="1" fill="#a0a0a0" shape-rendering="crispEdges"/><rect x="142.7" y="151" width="625.3" height="1" fill="#a0a0a0" shape-rendering="crispEdges"/><rect x="142.7" y="198" width="625.3" height="1" fill="#a0a0a0" shape-rendering="crispEdges"/><rect x="142.7" y="246" width="625.3" height="1" fill="#a0a0a0" shape-rendering="crispEdges"/><rect x="142.7" y="293" width="625.3" height="1" fill="#a0a0a0" shape-rendering="crispEdges"/><rect x="142.7" y="341" width="625.3" height="1" fill="#a0a0a0" shape-rendering="crispEdges"/><rect x="142.7" y="388" width="625.3" height="1" fill="#a0a0a0" shape-rendering="crispEdges"/><rect x="142.7" y="436" width="625.3" height="1" fill="#a0a0a0" shape-rendering="crispEdges"/><rect x="142.7" y="483" width="625.3" height="1" fill="#a0a0a0" shape-rendering="crispEdges"/><rect x="142.7" y="531" width="625.3" height="1" fill="#a0a0a0" shape-rendering="crispEdges"/><rect x="187.82" y="106.52" width="4.6" height="5.8" fill="#3273c4"/><rect x="192.89" y="118.40" width="4.6" height="5.8" fill="#3273c4"/><rect x="193.29" y="130.28" width="4.6" height="5.8" fill="#3273c4"/><rect x="211.41" y="142.16" width="3.0" height="5.8" fill="#3273c4"/><rect x="215.78" y="154.04" width="4.6" height="5.8" fill="#3273c4"/><rect x="264.00" y="165.92" width="1.9" height="5.8" fill="#3273c4"/><rect x="269.07" y="177.80" width="1.9" height="5.8" fill="#3273c4"/><rect x="269.47" y="189.68" width="1.9" height="5.8" fill="#3273c4"/><rect x="287.59" y="201.56" width="1.3" height="5.8" fill="#a4c0e6"/><rect x="290.54" y="213.44" width="1.9" height="5.8" fill="#3273c4"/><rect x="336.74" y="225.32" width="4.6" height="5.8" fill="#3273c4"/><rect x="341.80" y="237.20" width="4.6" height="5.8" fill="#3273c4"/><rect x="342.21" y="249.08" width="4.6" height="5.8" fill="#3273c4"/><rect x="360.33" y="260.96" width="3.0" height="5.8" fill="#3273c4"/><rect x="363.28" y="272.84" width="4.6" height="5.8" fill="#3273c4"/><rect x="363.28" y="284.72" width="40.8" height="5.8" fill="#3273c4"/><rect x="411.50" y="296.60" width="1.9" height="5.8" fill="#3273c4"/><rect x="416.56" y="308.48" width="1.9" height="5.8" fill="#3273c4"/><rect x="416.97" y="320.36" width="1.9" height="5.8" fill="#3273c4"/><rect x="435.09" y="332.24" width="1.5" height="5.8" fill="#5a8dd0"/><rect x="474.91" y="344.12" width="1.9" height="5.8" fill="#3273c4"/><rect x="484.23" y="356.00" width="4.6" height="5.8" fill="#3273c4"/><rect x="489.30" y="367.88" width="4.6" height="5.8" fill="#3273c4"/><rect x="489.70" y="379.76" width="4.6" height="5.8" fill="#3273c4"/><rect x="507.82" y="391.64" width="3.0" height="5.8" fill="#3273c4"/><rect x="547.65" y="403.52" width="4.6" height="5.8" fill="#3273c4"/><rect x="560.41" y="415.40" width="1.3" height="5.8" fill="#a4c0e6"/><rect x="565.48" y="427.28" width="1.9" height="5.8" fill="#3273c4"/><rect x="565.88" y="439.16" width="1.9" height="5.8" fill="#3273c4"/><rect x="584.00" y="451.04" width="1.3" height="5.8" fill="#a4c0e6"/><rect x="623.83" y="462.92" width="1.9" height="5.8" fill="#3273c4"/><rect x="633.15" y="474.80" width="4.6" height="5.8" fill="#3273c4"/><rect x="638.21" y="486.68" width="4.6" height="5.8" fill="#3273c4"/><rect x="638.62" y="498.56" width="4.6" height="5.8" fill="#3273c4"/><rect x="655.32" y="510.44" width="4.6" height="5.8" fill="#3273c4"/><rect x="696.56" y="522.32" width="4.6" height="5.8" fill="#3273c4"/><rect x="707.91" y="534.20" width="1.5" height="5.8" fill="#5a8dd0"/><path d="M363.4 275.4h-4.6v11.9h3" fill="none" stroke="#4a84c8" stroke-width="0.9"/><path d="M361.4 285.4l2.4 1.9-2.4 1.9z" fill="#4a84c8"/></svg>
<div class="a" style="left:6.75px;top:1.02px;font-size:8.5px;line-height:1;font-weight:bold;color:#1e1e1e;transform:scaleX(0.8200);transform-origin:100% 0;-webkit-text-stroke:0.15px #1e1e1e">Truck-04</div>
<div class="a" style="left:53.12px;top:1.02px;font-size:8.5px;line-height:1;font-weight:bold;color:#1e1e1e;transform:scaleX(0.8000);transform-origin:0 0;-webkit-text-stroke:0.15px #1e1e1e">1000 hour service</div>
<div class="a" style="left:11.82px;top:12.90px;font-size:8.5px;line-height:1;font-weight:bold;color:#1e1e1e;transform:scaleX(0.8200);transform-origin:100% 0;-webkit-text-stroke:0.15px #1e1e1e">Truck-02</div>
<div class="a" style="left:58.19px;top:12.90px;font-size:8.5px;line-height:1;font-weight:bold;color:#1e1e1e;transform:scaleX(0.8000);transform-origin:0 0;-webkit-text-stroke:0.15px #1e1e1e">1000 hour service</div>
<div class="a" style="left:12.22px;top:24.78px;font-size:8.5px;line-height:1;font-weight:bold;color:#1e1e1e;transform:scaleX(0.8200);transform-origin:100% 0;-webkit-text-stroke:0.15px #1e1e1e">Truck-05</div>
<div class="a" style="left:58.59px;top:24.78px;font-size:8.5px;line-height:1;font-weight:bold;color:#1e1e1e;transform:scaleX(0.8000);transform-origin:0 0;-webkit-text-stroke:0.15px #1e1e1e">1000 hour service</div>
<div class="a" style="left:30.34px;top:36.66px;font-size:8.5px;line-height:1;font-weight:bold;color:#1e1e1e;transform:scaleX(0.8200);transform-origin:100% 0;-webkit-text-stroke:0.15px #1e1e1e">Truck-01</div>
<div class="a" style="left:75.11px;top:36.66px;font-size:8.5px;line-height:1;font-weight:bold;color:#1e1e1e;transform:scaleX(0.8000);transform-origin:0 0;-webkit-text-stroke:0.15px #1e1e1e">1000 hour service</div>
<div class="a" style="left:34.71px;top:48.54px;font-size:8.5px;line-height:1;font-weight:bold;color:#1e1e1e;transform:scaleX(0.8200);transform-origin:100% 0;-webkit-text-stroke:0.15px #1e1e1e">Truck-03</div>
<div class="a" style="left:81.08px;top:48.54px;font-size:8.5px;line-height:1;font-weight:bold;color:#1e1e1e;transform:scaleX(0.8000);transform-origin:0 0;-webkit-text-stroke:0.15px #1e1e1e">500 hour service</div>
<div class="a" style="left:82.93px;top:60.42px;font-size:8.5px;line-height:1;font-weight:bold;color:#1e1e1e;transform:scaleX(0.8200);transform-origin:100% 0;-webkit-text-stroke:0.15px #1e1e1e">Truck-04</div>
<div class="a" style="left:126.60px;top:60.42px;font-size:8.5px;line-height:1;font-weight:bold;color:#1e1e1e;transform:scaleX(0.8000);transform-origin:0 0;-webkit-text-stroke:0.15px #1e1e1e">250 hour service</div>
<div class="a" style="left:88.00px;top:72.30px;font-size:8.5px;line-height:1;font-weight:bold;color:#1e1e1e;transform:scaleX(0.8200);transform-origin:100% 0;-webkit-text-stroke:0.15px #1e1e1e">Truck-02</div>
<div class="a" style="left:131.67px;top:72.30px;font-size:8.5px;line-height:1;font-weight:bold;color:#1e1e1e;transform:scaleX(0.8000);transform-origin:0 0;-webkit-text-stroke:0.15px #1e1e1e">250 hour service</div>
<div class="a" style="left:88.40px;top:84.18px;font-size:8.5px;line-height:1;font-weight:bold;color:#1e1e1e;transform:scaleX(0.8200);transform-origin:100% 0;-webkit-text-stroke:0.15px #1e1e1e">Truck-05</div>
<div class="a" style="left:132.07px;top:84.18px;font-size:8.5px;line-height:1;font-weight:bold;color:#1e1e1e;transform:scaleX(0.8000);transform-origin:0 0;-webkit-text-stroke:0.15px #1e1e1e">250 hour service</div>
<div class="a" style="left:106.52px;top:96.06px;font-size:8.5px;line-height:1;font-weight:bold;color:#1e1e1e;transform:scaleX(0.8200);transform-origin:100% 0;-webkit-text-stroke:0.15px #1e1e1e">Truck-01</div>
<div class="a" style="left:149.59px;top:96.06px;font-size:8.5px;line-height:1;font-weight:bold;color:#1e1e1e;transform:scaleX(0.8000);transform-origin:0 0;-webkit-text-stroke:0.15px #1e1e1e">250 hour service</div>
<div class="a" style="left:109.47px;top:107.94px;font-size:8.5px;line-height:1;font-weight:bold;color:#1e1e1e;transform:scaleX(0.8200);transform-origin:100% 0;-webkit-text-stroke:0.15px #1e1e1e">Truck-03</div>
<div class="a" style="left:153.14px;top:107.94px;font-size:8.5px;line-height:1;font-weight:bold;color:#1e1e1e;transform:scaleX(0.8000);transform-origin:0 0;-webkit-text-stroke:0.15px #1e1e1e">250 hour service</div>
<div class="a" style="left:155.67px;top:119.82px;font-size:8.5px;line-height:1;font-weight:bold;color:#1e1e1e;transform:scaleX(0.8200);transform-origin:100% 0;-webkit-text-stroke:0.15px #1e1e1e">Truck-04</div>
<div class="a" style="left:202.04px;top:119.82px;font-size:8.5px;line-height:1;font-weight:bold;color:#1e1e1e;transform:scaleX(0.8000);transform-origin:0 0;-webkit-text-stroke:0.15px #1e1e1e">500 hour service</div>
<div class="a" style="left:160.73px;top:131.70px;font-size:8.5px;line-height:1;font-weight:bold;color:#1e1e1e;transform:scaleX(0.8200);transform-origin:100% 0;-webkit-text-stroke:0.15px #1e1e1e">Truck-02</div>
<div class="a" style="left:207.10px;top:131.70px;font-size:8.5px;line-height:1;font-weight:bold;color:#1e1e1e;transform:scaleX(0.8000);transform-origin:0 0;-webkit-text-stroke:0.15px #1e1e1e">500 hour service</div>
<div class="a" style="left:161.14px;top:143.58px;font-size:8.5px;line-height:1;font-weight:bold;color:#1e1e1e;transform:scaleX(0.8200);transform-origin:100% 0;-webkit-text-stroke:0.15px #1e1e1e">Truck-05</div>
<div class="a" style="left:207.51px;top:143.58px;font-size:8.5px;line-height:1;font-weight:bold;color:#1e1e1e;transform:scaleX(0.8000);transform-origin:0 0;-webkit-text-stroke:0.15px #1e1e1e">500 hour service</div>
<div class="a" style="left:179.26px;top:155.46px;font-size:8.5px;line-height:1;font-weight:bold;color:#1e1e1e;transform:scaleX(0.8200);transform-origin:100% 0;-webkit-text-stroke:0.15px #1e1e1e">Truck-01</div>
<div class="a" style="left:224.03px;top:155.46px;font-size:8.5px;line-height:1;font-weight:bold;color:#1e1e1e;transform:scaleX(0.8000);transform-origin:0 0;-webkit-text-stroke:0.15px #1e1e1e">500 hour service</div>
<div class="a" style="left:182.21px;top:167.34px;font-size:8.5px;line-height:1;font-weight:bold;color:#1e1e1e;transform:scaleX(0.8200);transform-origin:100% 0;-webkit-text-stroke:0.15px #1e1e1e">Truck-03</div>
<div class="a" style="left:228.58px;top:167.34px;font-size:8.5px;line-height:1;font-weight:bold;color:#1e1e1e;transform:scaleX(0.8000);transform-origin:0 0;-webkit-text-stroke:0.15px #1e1e1e">3000 hour service</div>
<div class="a" style="left:182.21px;top:179.22px;font-size:8.5px;line-height:1;font-weight:bold;color:#1e1e1e;transform:scaleX(0.8200);transform-origin:100% 0;-webkit-text-stroke:0.15px #1e1e1e">Truck-03</div>
<div class="a" style="left:264.78px;top:179.22px;font-size:8.5px;line-height:1;font-weight:bold;color:#1e1e1e;transform:scaleX(0.8000);transform-origin:0 0;-webkit-text-stroke:0.15px #1e1e1e">22,000 hour service</div>
<div class="a" style="left:230.43px;top:191.10px;font-size:8.5px;line-height:1;font-weight:bold;color:#1e1e1e;transform:scaleX(0.8200);transform-origin:100% 0;-webkit-text-stroke:0.15px #1e1e1e">Truck-04</div>
<div class="a" style="left:274.10px;top:191.10px;font-size:8.5px;line-height:1;font-weight:bold;color:#1e1e1e;transform:scaleX(0.8000);transform-origin:0 0;-webkit-text-stroke:0.15px #1e1e1e">250 hour service</div>
<div class="a" style="left:235.49px;top:202.98px;font-size:8.5px;line-height:1;font-weight:bold;color:#1e1e1e;transform:scaleX(0.8200);transform-origin:100% 0;-webkit-text-stroke:0.15px #1e1e1e">Truck-02</div>
<div class="a" style="left:279.16px;top:202.98px;font-size:8.5px;line-height:1;font-weight:bold;color:#1e1e1e;transform:scaleX(0.8000);transform-origin:0 0;-webkit-text-stroke:0.15px #1e1e1e">250 hour service</div>
<div class="a" style="left:235.90px;top:214.86px;font-size:8.5px;line-height:1;font-weight:bold;color:#1e1e1e;transform:scaleX(0.8200);transform-origin:100% 0;-webkit-text-stroke:0.15px #1e1e1e">Truck-05</div>
<div class="a" style="left:279.57px;top:214.86px;font-size:8.5px;line-height:1;font-weight:bold;color:#1e1e1e;transform:scaleX(0.8000);transform-origin:0 0;-webkit-text-stroke:0.15px #1e1e1e">250 hour service</div>
<div class="a" style="left:254.02px;top:226.74px;font-size:8.5px;line-height:1;font-weight:bold;color:#1e1e1e;transform:scaleX(0.8200);transform-origin:100% 0;-webkit-text-stroke:0.15px #1e1e1e">Truck-01</div>
<div class="a" style="left:297.29px;top:226.74px;font-size:8.5px;line-height:1;font-weight:bold;color:#1e1e1e;transform:scaleX(0.8000);transform-origin:0 0;-webkit-text-stroke:0.15px #1e1e1e">250 hour service</div>
<div class="a" style="left:293.84px;top:238.62px;font-size:8.5px;line-height:1;font-weight:bold;color:#1e1e1e;transform:scaleX(0.8200);transform-origin:100% 0;-webkit-text-stroke:0.15px #1e1e1e">Truck-03</div>
<div class="a" style="left:337.51px;top:238.62px;font-size:8.5px;line-height:1;font-weight:bold;color:#1e1e1e;transform:scaleX(0.8000);transform-origin:0 0;-webkit-text-stroke:0.15px #1e1e1e">250 hour service</div>
<div class="a" style="left:303.16px;top:250.50px;font-size:8.5px;line-height:1;font-weight:bold;color:#1e1e1e;transform:scaleX(0.8200);transform-origin:100% 0;-webkit-text-stroke:0.15px #1e1e1e">Truck-04</div>
<div class="a" style="left:349.53px;top:250.50px;font-size:8.5px;line-height:1;font-weight:bold;color:#1e1e1e;transform:scaleX(0.8000);transform-origin:0 0;-webkit-text-stroke:0.15px #1e1e1e">3000 hour service</div>
<div class="a" style="left:308.23px;top:262.38px;font-size:8.5px;line-height:1;font-weight:bold;color:#1e1e1e;transform:scaleX(0.8200);transform-origin:100% 0;-webkit-text-stroke:0.15px #1e1e1e">Truck-02</div>
<div class="a" style="left:354.60px;top:262.38px;font-size:8.5px;line-height:1;font-weight:bold;color:#1e1e1e;transform:scaleX(0.8000);transform-origin:0 0;-webkit-text-stroke:0.15px #1e1e1e">1000 hour service</div>
<div class="a" style="left:308.63px;top:274.26px;font-size:8.5px;line-height:1;font-weight:bold;color:#1e1e1e;transform:scaleX(0.8200);transform-origin:100% 0;-webkit-text-stroke:0.15px #1e1e1e">Truck-05</div>
<div class="a" style="left:355.00px;top:274.26px;font-size:8.5px;line-height:1;font-weight:bold;color:#1e1e1e;transform:scaleX(0.8000);transform-origin:0 0;-webkit-text-stroke:0.15px #1e1e1e">3000 hour service</div>
<div class="a" style="left:326.75px;top:286.14px;font-size:8.5px;line-height:1;font-weight:bold;color:#1e1e1e;transform:scaleX(0.8200);transform-origin:100% 0;-webkit-text-stroke:0.15px #1e1e1e">Truck-01</div>
<div class="a" style="left:371.52px;top:286.14px;font-size:8.5px;line-height:1;font-weight:bold;color:#1e1e1e;transform:scaleX(0.8000);transform-origin:0 0;-webkit-text-stroke:0.15px #1e1e1e">1000 hour service</div>
<div class="a" style="left:366.58px;top:298.02px;font-size:8.5px;line-height:1;font-weight:bold;color:#1e1e1e;transform:scaleX(0.8200);transform-origin:100% 0;-webkit-text-stroke:0.15px #1e1e1e">Truck-03</div>
<div class="a" style="left:412.95px;top:298.02px;font-size:8.5px;line-height:1;font-weight:bold;color:#1e1e1e;transform:scaleX(0.8000);transform-origin:0 0;-webkit-text-stroke:0.15px #1e1e1e">500 hour service</div>
<div class="a" style="left:379.34px;top:309.90px;font-size:8.5px;line-height:1;font-weight:bold;color:#1e1e1e;transform:scaleX(0.8200);transform-origin:100% 0;-webkit-text-stroke:0.15px #1e1e1e">Truck-04</div>
<div class="a" style="left:422.41px;top:309.90px;font-size:8.5px;line-height:1;font-weight:bold;color:#1e1e1e;transform:scaleX(0.8000);transform-origin:0 0;-webkit-text-stroke:0.15px #1e1e1e">250 hour service</div>
<div class="a" style="left:384.41px;top:321.78px;font-size:8.5px;line-height:1;font-weight:bold;color:#1e1e1e;transform:scaleX(0.8200);transform-origin:100% 0;-webkit-text-stroke:0.15px #1e1e1e">Truck-02</div>
<div class="a" style="left:428.08px;top:321.78px;font-size:8.5px;line-height:1;font-weight:bold;color:#1e1e1e;transform:scaleX(0.8000);transform-origin:0 0;-webkit-text-stroke:0.15px #1e1e1e">250 hour service</div>
<div class="a" style="left:384.81px;top:333.66px;font-size:8.5px;line-height:1;font-weight:bold;color:#1e1e1e;transform:scaleX(0.8200);transform-origin:100% 0;-webkit-text-stroke:0.15px #1e1e1e">Truck-05</div>
<div class="a" style="left:428.48px;top:333.66px;font-size:8.5px;line-height:1;font-weight:bold;color:#1e1e1e;transform:scaleX(0.8000);transform-origin:0 0;-webkit-text-stroke:0.15px #1e1e1e">250 hour service</div>
<div class="a" style="left:402.93px;top:345.54px;font-size:8.5px;line-height:1;font-weight:bold;color:#1e1e1e;transform:scaleX(0.8200);transform-origin:100% 0;-webkit-text-stroke:0.15px #1e1e1e">Truck-01</div>
<div class="a" style="left:446.00px;top:345.54px;font-size:8.5px;line-height:1;font-weight:bold;color:#1e1e1e;transform:scaleX(0.8000);transform-origin:0 0;-webkit-text-stroke:0.15px #1e1e1e">250 hour service</div>
<div class="a" style="left:442.76px;top:357.42px;font-size:8.5px;line-height:1;font-weight:bold;color:#1e1e1e;transform:scaleX(0.8200);transform-origin:100% 0;-webkit-text-stroke:0.15px #1e1e1e">Truck-03</div>
<div class="a" style="left:486.43px;top:357.42px;font-size:8.5px;line-height:1;font-weight:bold;color:#1e1e1e;transform:scaleX(0.8000);transform-origin:0 0;-webkit-text-stroke:0.15px #1e1e1e">250 hour service</div>
<div class="a" style="left:452.08px;top:369.30px;font-size:8.5px;line-height:1;font-weight:bold;color:#1e1e1e;transform:scaleX(0.8200);transform-origin:100% 0;-webkit-text-stroke:0.15px #1e1e1e">Truck-04</div>
<div class="a" style="left:498.45px;top:369.30px;font-size:8.5px;line-height:1;font-weight:bold;color:#1e1e1e;transform:scaleX(0.8000);transform-origin:0 0;-webkit-text-stroke:0.15px #1e1e1e">500 hour service</div>
<div class="a" style="left:457.14px;top:381.18px;font-size:8.5px;line-height:1;font-weight:bold;color:#1e1e1e;transform:scaleX(0.8200);transform-origin:100% 0;-webkit-text-stroke:0.15px #1e1e1e">Truck-02</div>
<div class="a" style="left:503.51px;top:381.18px;font-size:8.5px;line-height:1;font-weight:bold;color:#1e1e1e;transform:scaleX(0.8000);transform-origin:0 0;-webkit-text-stroke:0.15px #1e1e1e">500 hour service</div>
<div class="a" style="left:457.55px;top:393.06px;font-size:8.5px;line-height:1;font-weight:bold;color:#1e1e1e;transform:scaleX(0.8200);transform-origin:100% 0;-webkit-text-stroke:0.15px #1e1e1e">Truck-05</div>
<div class="a" style="left:503.92px;top:393.06px;font-size:8.5px;line-height:1;font-weight:bold;color:#1e1e1e;transform:scaleX(0.8000);transform-origin:0 0;-webkit-text-stroke:0.15px #1e1e1e">500 hour service</div>
<div class="a" style="left:474.25px;top:404.94px;font-size:8.5px;line-height:1;font-weight:bold;color:#1e1e1e;transform:scaleX(0.8200);transform-origin:100% 0;-webkit-text-stroke:0.15px #1e1e1e">Truck-01</div>
<div class="a" style="left:520.62px;top:404.94px;font-size:8.5px;line-height:1;font-weight:bold;color:#1e1e1e;transform:scaleX(0.8000);transform-origin:0 0;-webkit-text-stroke:0.15px #1e1e1e">500 hour service</div>
<div class="a" style="left:515.49px;top:416.82px;font-size:8.5px;line-height:1;font-weight:bold;color:#1e1e1e;transform:scaleX(0.8200);transform-origin:100% 0;-webkit-text-stroke:0.15px #1e1e1e">Truck-03</div>
<div class="a" style="left:561.86px;top:416.82px;font-size:8.5px;line-height:1;font-weight:bold;color:#1e1e1e;transform:scaleX(0.8000);transform-origin:0 0;-webkit-text-stroke:0.15px #1e1e1e">1000 hour service</div>
<div class="a" style="left:526.84px;top:428.70px;font-size:8.5px;line-height:1;font-weight:bold;color:#1e1e1e;transform:scaleX(0.8200);transform-origin:100% 0;-webkit-text-stroke:0.15px #1e1e1e">Truck-04</div>
<div class="a" style="left:570.11px;top:428.70px;font-size:8.5px;line-height:1;font-weight:bold;color:#1e1e1e;transform:scaleX(0.8000);transform-origin:0 0;-webkit-text-stroke:0.15px #1e1e1e">250 hour service</div>
</div>
<div class="a" style="left:142.7px;top:82px;width:625.3px;height:21.3px;background:#e6e6e6;overflow:hidden">
<div class="a" style="left:-1.37px;top:14px;width:0.8px;height:7px;background:#d8d8d8"></div><div class="a" style="left:3.49px;top:14px;width:0.8px;height:7px;background:#d8d8d8"></div><div class="a" style="left:8.35px;top:14px;width:0.8px;height:7px;background:#d8d8d8"></div><div class="a" style="left:13.21px;top:14px;width:0.8px;height:7px;background:#d8d8d8"></div><div class="a" style="left:18.08px;top:14px;width:0.8px;height:7px;background:#d8d8d8"></div><div class="a" style="left:22.94px;top:14px;width:0.8px;height:7px;background:#d8d8d8"></div><div class="a" style="left:27.80px;top:14px;width:0.8px;height:7px;background:#d8d8d8"></div><div class="a" style="left:32.66px;top:14px;width:0.8px;height:7px;background:#d8d8d8"></div><div class="a" style="left:37.53px;top:14px;width:0.8px;height:7px;background:#d8d8d8"></div><div class="a" style="left:42.39px;top:14px;width:0.8px;height:7px;background:#d8d8d8"></div><div class="a" style="left:47.25px;top:14px;width:0.8px;height:7px;background:#d8d8d8"></div><div class="a" style="left:52.11px;top:14px;width:0.8px;height:7px;background:#d8d8d8"></div><div class="a" style="left:56.98px;top:14px;width:0.8px;height:7px;background:#d8d8d8"></div><div class="a" style="left:61.84px;top:14px;width:0.8px;height:7px;background:#d8d8d8"></div><div class="a" style="left:66.70px;top:14px;width:0.8px;height:7px;background:#d8d8d8"></div><div class="a" style="left:71.56px;top:14px;width:0.8px;height:7px;background:#d8d8d8"></div><div class="a" style="left:76.43px;top:14px;width:0.8px;height:7px;background:#d8d8d8"></div><div class="a" style="left:81.29px;top:14px;width:0.8px;height:7px;background:#d8d8d8"></div><div class="a" style="left:86.15px;top:14px;width:0.8px;height:7px;background:#d8d8d8"></div><div class="a" style="left:91.01px;top:14px;width:0.8px;height:7px;background:#d8d8d8"></div><div class="a" style="left:95.88px;top:14px;width:0.8px;height:7px;background:#d8d8d8"></div><div class="a" style="left:100.74px;top:14px;width:0.8px;height:7px;background:#d8d8d8"></div><div class="a" style="left:105.60px;top:14px;width:0.8px;height:7px;background:#d8d8d8"></div><div class="a" style="left:110.46px;top:14px;width:0.8px;height:7px;background:#d8d8d8"></div><div class="a" style="left:115.33px;top:14px;width:0.8px;height:7px;background:#d8d8d8"></div><div class="a" style="left:120.19px;top:14px;width:0.8px;height:7px;background:#d8d8d8"></div><div class="a" style="left:125.05px;top:14px;width:0.8px;height:7px;background:#d8d8d8"></div><div class="a" style="left:129.91px;top:14px;width:0.8px;height:7px;background:#d8d8d8"></div><div class="a" style="left:134.78px;top:14px;width:0.8px;height:7px;background:#d8d8d8"></div><div class="a" style="left:139.64px;top:14px;width:0.8px;height:7px;background:#d8d8d8"></div><div class="a" style="left:144.50px;top:14px;width:0.8px;height:7px;background:#d8d8d8"></div><div class="a" style="left:149.36px;top:14px;width:0.8px;height:7px;background:#d8d8d8"></div><div class="a" style="left:154.22px;top:14px;width:0.8px;height:7px;background:#d8d8d8"></div><div class="a" style="left:159.09px;top:14px;width:0.8px;height:7px;background:#d8d8d8"></div><div class="a" style="left:163.95px;top:14px;width:0.8px;height:7px;background:#d8d8d8"></div><div class="a" style="left:168.81px;top:14px;width:0.8px;height:7px;background:#d8d8d8"></div><div class="a" style="left:173.67px;top:14px;width:0.8px;height:7px;background:#d8d8d8"></div><div class="a" style="left:178.54px;top:14px;width:0.8px;height:7px;background:#d8d8d8"></div><div class="a" style="left:183.40px;top:14px;width:0.8px;height:7px;background:#d8d8d8"></div><div class="a" style="left:188.26px;top:14px;width:0.8px;height:7px;background:#d8d8d8"></div><div class="a" style="left:193.13px;top:14px;width:0.8px;height:7px;background:#d8d8d8"></div><div class="a" style="left:197.99px;top:14px;width:0.8px;height:7px;background:#d8d8d8"></div><div class="a" style="left:202.85px;top:14px;width:0.8px;height:7px;background:#d8d8d8"></div><div class="a" style="left:207.71px;top:14px;width:0.8px;height:7px;background:#d8d8d8"></div><div class="a" style="left:212.58px;top:14px;width:0.8px;height:7px;background:#d8d8d8"></div><div class="a" style="left:217.44px;top:14px;width:0.8px;height:7px;background:#d8d8d8"></div><div class="a" style="left:222.30px;top:14px;width:0.8px;height:7px;background:#d8d8d8"></div><div class="a" style="left:227.16px;top:14px;width:0.8px;height:7px;background:#d8d8d8"></div><div class="a" style="left:232.03px;top:14px;width:0.8px;height:7px;background:#d8d8d8"></div><div class="a" style="left:236.89px;top:14px;width:0.8px;height:7px;background:#d8d8d8"></div><div class="a" style="left:241.75px;top:14px;width:0.8px;height:7px;background:#d8d8d8"></div><div class="a" style="left:246.61px;top:14px;width:0.8px;height:7px;background:#d8d8d8"></div><div class="a" style="left:251.47px;top:14px;width:0.8px;height:7px;background:#d8d8d8"></div><div class="a" style="left:256.34px;top:14px;width:0.8px;height:7px;background:#d8d8d8"></div><div class="a" style="left:261.20px;top:14px;width:0.8px;height:7px;background:#d8d8d8"></div><div class="a" style="left:266.06px;top:14px;width:0.8px;height:7px;background:#d8d8d8"></div><div class="a" style="left:270.93px;top:14px;width:0.8px;height:7px;background:#d8d8d8"></div><div class="a" style="left:275.79px;top:14px;width:0.8px;height:7px;background:#d8d8d8"></div><div class="a" style="left:280.65px;top:14px;width:0.8px;height:7px;background:#d8d8d8"></div><div class="a" style="left:285.51px;top:14px;width:0.8px;height:7px;background:#d8d8d8"></div><div class="a" style="left:290.38px;top:14px;width:0.8px;height:7px;background:#d8d8d8"></div><div class="a" style="left:295.24px;top:14px;width:0.8px;height:7px;background:#d8d8d8"></div><div class="a" style="left:300.10px;top:14px;width:0.8px;height:7px;background:#d8d8d8"></div><div class="a" style="left:304.96px;top:14px;width:0.8px;height:7px;background:#d8d8d8"></div><div class="a" style="left:309.82px;top:14px;width:0.8px;height:7px;background:#d8d8d8"></div><div class="a" style="left:314.69px;top:14px;width:0.8px;height:7px;background:#d8d8d8"></div><div class="a" style="left:319.55px;top:14px;width:0.8px;height:7px;background:#d8d8d8"></div><div class="a" style="left:324.41px;top:14px;width:0.8px;height:7px;background:#d8d8d8"></div><div class="a" style="left:329.28px;top:14px;width:0.8px;height:7px;background:#d8d8d8"></div><div class="a" style="left:334.14px;top:14px;width:0.8px;height:7px;background:#d8d8d8"></div><div class="a" style="left:339.00px;top:14px;width:0.8px;height:7px;background:#d8d8d8"></div><div class="a" style="left:343.86px;top:14px;width:0.8px;height:7px;background:#d8d8d8"></div><div class="a" style="left:348.73px;top:14px;width:0.8px;height:7px;background:#d8d8d8"></div><div class="a" style="left:353.59px;top:14px;width:0.8px;height:7px;background:#d8d8d8"></div><div class="a" style="left:358.45px;top:14px;width:0.8px;height:7px;background:#d8d8d8"></div><div class="a" style="left:363.31px;top:14px;width:0.8px;height:7px;background:#d8d8d8"></div><div class="a" style="left:368.18px;top:14px;width:0.8px;height:7px;background:#d8d8d8"></div><div class="a" style="left:373.04px;top:14px;width:0.8px;height:7px;background:#d8d8d8"></div><div class="a" style="left:377.90px;top:14px;width:0.8px;height:7px;background:#d8d8d8"></div><div class="a" style="left:382.76px;top:14px;width:0.8px;height:7px;background:#d8d8d8"></div><div class="a" style="left:387.63px;top:14px;width:0.8px;height:7px;background:#d8d8d8"></div><div class="a" style="left:392.49px;top:14px;width:0.8px;height:7px;background:#d8d8d8"></div><div class="a" style="left:397.35px;top:14px;width:0.8px;height:7px;background:#d8d8d8"></div><div class="a" style="left:402.21px;top:14px;width:0.8px;height:7px;background:#d8d8d8"></div><div class="a" style="left:407.07px;top:14px;width:0.8px;height:7px;background:#d8d8d8"></div><div class="a" style="left:411.94px;top:14px;width:0.8px;height:7px;background:#d8d8d8"></div><div class="a" style="left:416.80px;top:14px;width:0.8px;height:7px;background:#d8d8d8"></div><div class="a" style="left:421.66px;top:14px;width:0.8px;height:7px;background:#d8d8d8"></div><div class="a" style="left:426.53px;top:14px;width:0.8px;height:7px;background:#d8d8d8"></div><div class="a" style="left:431.39px;top:14px;width:0.8px;height:7px;background:#d8d8d8"></div><div class="a" style="left:436.25px;top:14px;width:0.8px;height:7px;background:#d8d8d8"></div><div class="a" style="left:441.11px;top:14px;width:0.8px;height:7px;background:#d8d8d8"></div><div class="a" style="left:445.98px;top:14px;width:0.8px;height:7px;background:#d8d8d8"></div><div class="a" style="left:450.84px;top:14px;width:0.8px;height:7px;background:#d8d8d8"></div><div class="a" style="left:455.70px;top:14px;width:0.8px;height:7px;background:#d8d8d8"></div><div class="a" style="left:460.56px;top:14px;width:0.8px;height:7px;background:#d8d8d8"></div><div class="a" style="left:465.43px;top:14px;width:0.8px;height:7px;background:#d8d8d8"></div><div class="a" style="left:470.29px;top:14px;width:0.8px;height:7px;background:#d8d8d8"></div><div class="a" style="left:475.15px;top:14px;width:0.8px;height:7px;background:#d8d8d8"></div><div class="a" style="left:480.01px;top:14px;width:0.8px;height:7px;background:#d8d8d8"></div><div class="a" style="left:484.88px;top:14px;width:0.8px;height:7px;background:#d8d8d8"></div><div class="a" style="left:489.74px;top:14px;width:0.8px;height:7px;background:#d8d8d8"></div><div class="a" style="left:494.60px;top:14px;width:0.8px;height:7px;background:#d8d8d8"></div><div class="a" style="left:499.46px;top:14px;width:0.8px;height:7px;background:#d8d8d8"></div><div class="a" style="left:504.32px;top:14px;width:0.8px;height:7px;background:#d8d8d8"></div><div class="a" style="left:509.19px;top:14px;width:0.8px;height:7px;background:#d8d8d8"></div><div class="a" style="left:514.05px;top:14px;width:0.8px;height:7px;background:#d8d8d8"></div><div class="a" style="left:518.91px;top:14px;width:0.8px;height:7px;background:#d8d8d8"></div><div class="a" style="left:523.77px;top:14px;width:0.8px;height:7px;background:#d8d8d8"></div><div class="a" style="left:528.64px;top:14px;width:0.8px;height:7px;background:#d8d8d8"></div><div class="a" style="left:533.50px;top:14px;width:0.8px;height:7px;background:#d8d8d8"></div><div class="a" style="left:538.36px;top:14px;width:0.8px;height:7px;background:#d8d8d8"></div><div class="a" style="left:543.23px;top:14px;width:0.8px;height:7px;background:#d8d8d8"></div><div class="a" style="left:548.09px;top:14px;width:0.8px;height:7px;background:#d8d8d8"></div><div class="a" style="left:552.95px;top:14px;width:0.8px;height:7px;background:#d8d8d8"></div><div class="a" style="left:557.81px;top:14px;width:0.8px;height:7px;background:#d8d8d8"></div><div class="a" style="left:562.68px;top:14px;width:0.8px;height:7px;background:#d8d8d8"></div><div class="a" style="left:567.54px;top:14px;width:0.8px;height:7px;background:#d8d8d8"></div><div class="a" style="left:572.40px;top:14px;width:0.8px;height:7px;background:#d8d8d8"></div><div class="a" style="left:577.26px;top:14px;width:0.8px;height:7px;background:#d8d8d8"></div><div class="a" style="left:582.12px;top:14px;width:0.8px;height:7px;background:#d8d8d8"></div><div class="a" style="left:586.99px;top:14px;width:0.8px;height:7px;background:#d8d8d8"></div><div class="a" style="left:591.85px;top:14px;width:0.8px;height:7px;background:#d8d8d8"></div><div class="a" style="left:596.71px;top:14px;width:0.8px;height:7px;background:#d8d8d8"></div><div class="a" style="left:601.57px;top:14px;width:0.8px;height:7px;background:#d8d8d8"></div><div class="a" style="left:606.44px;top:14px;width:0.8px;height:7px;background:#d8d8d8"></div><div class="a" style="left:611.30px;top:14px;width:0.8px;height:7px;background:#d8d8d8"></div><div class="a" style="left:616.16px;top:14px;width:0.8px;height:7px;background:#d8d8d8"></div><div class="a" style="left:621.02px;top:14px;width:0.8px;height:7px;background:#d8d8d8"></div><div class="a" style="left:625.89px;top:14px;width:0.8px;height:7px;background:#d8d8d8"></div><div class="a" style="left:630.75px;top:14px;width:0.8px;height:7px;background:#d8d8d8"></div>
<div class="a" style="left:27.70px;top:5px;width:1px;height:16.3px;background:#cbcbcb"></div>
<div class="a" style="left:163.85px;top:5px;width:1px;height:16.3px;background:#cbcbcb"></div>
<div class="a" style="left:314.59px;top:5px;width:1px;height:16.3px;background:#cbcbcb"></div>
<div class="a" style="left:460.46px;top:5px;width:1px;height:16.3px;background:#cbcbcb"></div>
<div class="a" style="left:611.20px;top:5px;width:1px;height:16.3px;background:#cbcbcb"></div>
</div>
<div class="a" style="left:142.7px;top:103px;width:625.3px;height:1px;background:#cdcdcd"></div>
<div class="a" style="left:173.90px;top:86.04px;font-size:6.8px;line-height:1;color:#7b8089;transform:scaleX(0.8707);transform-origin:0 0;">February 2022</div>
<div class="a" style="left:310.05px;top:86.04px;font-size:6.8px;line-height:1;color:#7b8089;transform:scaleX(0.8940);transform-origin:0 0;">March 2022</div>
<div class="a" style="left:460.79px;top:86.04px;font-size:6.8px;line-height:1;color:#7b8089;transform:scaleX(0.9148);transform-origin:0 0;">April 2022</div>
<div class="a" style="left:606.66px;top:86.04px;font-size:6.8px;line-height:1;color:#7b8089;transform:scaleX(0.9042);transform-origin:0 0;">May 2022</div>
<div class="a" style="left:757.40px;top:86.04px;font-size:6.8px;line-height:1;color:#7b8089;transform:scaleX(0.9449);transform-origin:0 0;">June 2022</div>
<div class="a" style="left:0;top:539.3px;width:768px;height:8.7px;background:#f0f0f0"></div>
<div class="a" style="left:0;top:539.3px;width:14px;height:8.7px;background:#e6e6e6"></div>
<div class="a" style="left:139.5px;top:539.3px;width:3.3px;height:8.7px;background:#d6d6d6"></div>
<div class="a" style="left:14px;top:539.5px;width:8.7px;height:8.2px;background:#fff;border:0.9px solid #ababab"></div>
<div class="a" style="left:130.8px;top:539.5px;width:8px;height:8.2px;background:#fff;border:0.9px solid #ababab"></div>
<div class="a" style="left:143.8px;top:539.5px;width:7.8px;height:8.2px;background:#fff;border:0.9px solid #ababab"></div>
<div class="a" style="left:32px;top:539.5px;width:16.4px;height:8.2px;background:#fff;border:0.9px solid #ababab"></div>
<div class="a" style="left:248.2px;top:539.6px;width:350.3px;height:8.2px;background:#fff;border:0.9px solid #ababab"></div>
<svg style="left:0;top:0" width="160" height="551" viewBox="0 0 160 551">
<path d="M19.4 541.9v3.6l-2.2-1.8z" fill="#555"/>
<path d="M134 541.9v3.6l2.2-1.8z" fill="#555"/>
<path d="M148.6 541.9v3.6l-2.2-1.8z" fill="#555"/>
</svg>
<div class="a" style="left:0;top:548px;width:768px;height:3px;background:#f3f3f3"></div></body></html>
